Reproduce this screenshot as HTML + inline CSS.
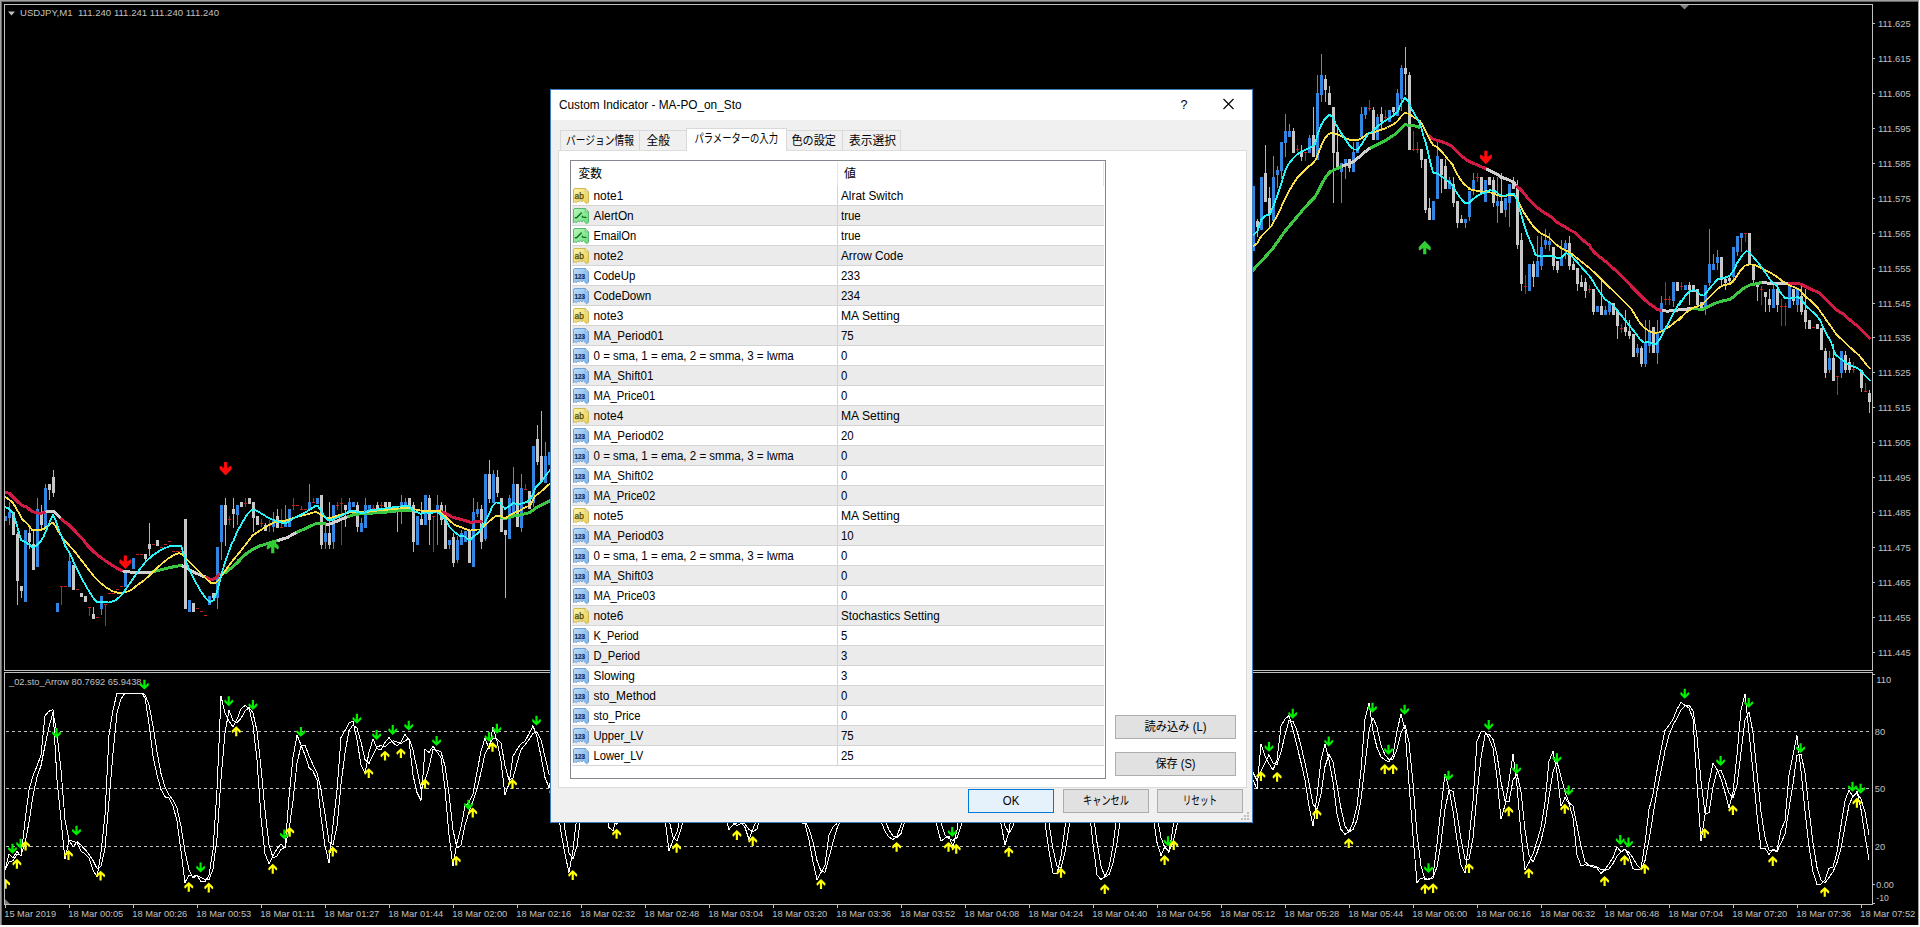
<!DOCTYPE html>
<html lang="ja"><head><meta charset="utf-8"><title>USDJPY,M1 - Custom Indicator - MA-PO_on_Sto</title>
<style>html,body{margin:0;padding:0;background:#000;width:1920px;height:927px;overflow:hidden}svg{display:block}text{white-space:pre}</style>
</head><body>
<svg width="1920" height="927" viewBox="0 0 1920 927">
<rect x="0" y="0" width="1920" height="927" fill="#000"/>
<g shape-rendering="crispEdges">
<rect x="0" y="0" width="1920" height="1" fill="#a0a0a0"/>
<rect x="0" y="1" width="1920" height="1" fill="#696969"/>
<rect x="0" y="0" width="1" height="925" fill="#a0a0a0"/>
<rect x="1" y="1" width="1" height="924" fill="#696969"/>
<rect x="1918" y="0" width="1" height="925" fill="#a0a0a0"/>
<rect x="1919" y="0" width="1" height="927" fill="#ffffff"/>
<rect x="0" y="925" width="1920" height="2" fill="#ffffff"/>
<rect x="4" y="4" width="1869" height="1" fill="#c0c0c0"/>
<rect x="4" y="4" width="1" height="667" fill="#c0c0c0"/>
<rect x="4" y="670" width="1869" height="1" fill="#c0c0c0"/>
<rect x="4" y="672" width="1869" height="1" fill="#c0c0c0"/>
<rect x="4" y="672" width="1" height="233" fill="#c0c0c0"/>
<rect x="4" y="904" width="1869" height="1" fill="#c0c0c0"/>
<rect x="1872" y="4" width="1" height="667" fill="#c0c0c0"/>
<rect x="1872" y="672" width="1" height="233" fill="#c0c0c0"/>
<rect x="1873" y="23" width="2" height="1" fill="#c0c0c0"/>
<rect x="1873" y="58" width="2" height="1" fill="#c0c0c0"/>
<rect x="1873" y="93" width="2" height="1" fill="#c0c0c0"/>
<rect x="1873" y="128" width="2" height="1" fill="#c0c0c0"/>
<rect x="1873" y="163" width="2" height="1" fill="#c0c0c0"/>
<rect x="1873" y="198" width="2" height="1" fill="#c0c0c0"/>
<rect x="1873" y="233" width="2" height="1" fill="#c0c0c0"/>
<rect x="1873" y="268" width="2" height="1" fill="#c0c0c0"/>
<rect x="1873" y="303" width="2" height="1" fill="#c0c0c0"/>
<rect x="1873" y="337" width="2" height="1" fill="#c0c0c0"/>
<rect x="1873" y="372" width="2" height="1" fill="#c0c0c0"/>
<rect x="1873" y="407" width="2" height="1" fill="#c0c0c0"/>
<rect x="1873" y="442" width="2" height="1" fill="#c0c0c0"/>
<rect x="1873" y="477" width="2" height="1" fill="#c0c0c0"/>
<rect x="1873" y="512" width="2" height="1" fill="#c0c0c0"/>
<rect x="1873" y="547" width="2" height="1" fill="#c0c0c0"/>
<rect x="1873" y="582" width="2" height="1" fill="#c0c0c0"/>
<rect x="1873" y="617" width="2" height="1" fill="#c0c0c0"/>
<rect x="1873" y="652" width="2" height="1" fill="#c0c0c0"/>
<rect x="1873" y="674" width="2" height="1" fill="#c0c0c0"/>
<rect x="1873" y="884" width="2" height="1" fill="#c0c0c0"/>
<rect x="1873" y="903" width="2" height="1" fill="#c0c0c0"/>
<rect x="5" y="905" width="1" height="3" fill="#c0c0c0"/>
<rect x="69" y="905" width="1" height="3" fill="#c0c0c0"/>
<rect x="133" y="905" width="1" height="3" fill="#c0c0c0"/>
<rect x="197" y="905" width="1" height="3" fill="#c0c0c0"/>
<rect x="261" y="905" width="1" height="3" fill="#c0c0c0"/>
<rect x="325" y="905" width="1" height="3" fill="#c0c0c0"/>
<rect x="389" y="905" width="1" height="3" fill="#c0c0c0"/>
<rect x="453" y="905" width="1" height="3" fill="#c0c0c0"/>
<rect x="517" y="905" width="1" height="3" fill="#c0c0c0"/>
<rect x="581" y="905" width="1" height="3" fill="#c0c0c0"/>
<rect x="645" y="905" width="1" height="3" fill="#c0c0c0"/>
<rect x="709" y="905" width="1" height="3" fill="#c0c0c0"/>
<rect x="773" y="905" width="1" height="3" fill="#c0c0c0"/>
<rect x="837" y="905" width="1" height="3" fill="#c0c0c0"/>
<rect x="901" y="905" width="1" height="3" fill="#c0c0c0"/>
<rect x="965" y="905" width="1" height="3" fill="#c0c0c0"/>
<rect x="1029" y="905" width="1" height="3" fill="#c0c0c0"/>
<rect x="1093" y="905" width="1" height="3" fill="#c0c0c0"/>
<rect x="1157" y="905" width="1" height="3" fill="#c0c0c0"/>
<rect x="1221" y="905" width="1" height="3" fill="#c0c0c0"/>
<rect x="1285" y="905" width="1" height="3" fill="#c0c0c0"/>
<rect x="1349" y="905" width="1" height="3" fill="#c0c0c0"/>
<rect x="1413" y="905" width="1" height="3" fill="#c0c0c0"/>
<rect x="1477" y="905" width="1" height="3" fill="#c0c0c0"/>
<rect x="1541" y="905" width="1" height="3" fill="#c0c0c0"/>
<rect x="1605" y="905" width="1" height="3" fill="#c0c0c0"/>
<rect x="1669" y="905" width="1" height="3" fill="#c0c0c0"/>
<rect x="1733" y="905" width="1" height="3" fill="#c0c0c0"/>
<rect x="1797" y="905" width="1" height="3" fill="#c0c0c0"/>
<rect x="1861" y="905" width="1" height="3" fill="#c0c0c0"/>
</g>
<path d="M1680 5 L1689 5 L1684.5 9.5 Z" fill="#808080"/>
<path d="M8 11.5 L15 11.5 L11.5 15.5 Z" fill="#c0c0c0"/>
<text x="20" y="16" font-family="'Liberation Sans',sans-serif" font-size="9.8" fill="#c0c0c0" textLength="199" lengthAdjust="spacingAndGlyphs" xml:space="preserve">USDJPY,M1  111.240 111.241 111.240 111.240</text>
<text x="9" y="685" font-family="'Liberation Sans',sans-serif" font-size="9.8" fill="#c0c0c0" textLength="132.5" lengthAdjust="spacingAndGlyphs" xml:space="preserve">_02.sto_Arrow 80.7692 65.9438</text>
<text x="1878" y="27" font-family="'Liberation Sans',sans-serif" font-size="9.8" fill="#c0c0c0" textLength="32.8" lengthAdjust="spacingAndGlyphs" xml:space="preserve">111.625</text>
<text x="1878" y="62" font-family="'Liberation Sans',sans-serif" font-size="9.8" fill="#c0c0c0" textLength="32.8" lengthAdjust="spacingAndGlyphs" xml:space="preserve">111.615</text>
<text x="1878" y="97" font-family="'Liberation Sans',sans-serif" font-size="9.8" fill="#c0c0c0" textLength="32.8" lengthAdjust="spacingAndGlyphs" xml:space="preserve">111.605</text>
<text x="1878" y="132" font-family="'Liberation Sans',sans-serif" font-size="9.8" fill="#c0c0c0" textLength="32.8" lengthAdjust="spacingAndGlyphs" xml:space="preserve">111.595</text>
<text x="1878" y="167" font-family="'Liberation Sans',sans-serif" font-size="9.8" fill="#c0c0c0" textLength="32.8" lengthAdjust="spacingAndGlyphs" xml:space="preserve">111.585</text>
<text x="1878" y="202" font-family="'Liberation Sans',sans-serif" font-size="9.8" fill="#c0c0c0" textLength="32.8" lengthAdjust="spacingAndGlyphs" xml:space="preserve">111.575</text>
<text x="1878" y="237" font-family="'Liberation Sans',sans-serif" font-size="9.8" fill="#c0c0c0" textLength="32.8" lengthAdjust="spacingAndGlyphs" xml:space="preserve">111.565</text>
<text x="1878" y="272" font-family="'Liberation Sans',sans-serif" font-size="9.8" fill="#c0c0c0" textLength="32.8" lengthAdjust="spacingAndGlyphs" xml:space="preserve">111.555</text>
<text x="1878" y="307" font-family="'Liberation Sans',sans-serif" font-size="9.8" fill="#c0c0c0" textLength="32.8" lengthAdjust="spacingAndGlyphs" xml:space="preserve">111.545</text>
<text x="1878" y="341" font-family="'Liberation Sans',sans-serif" font-size="9.8" fill="#c0c0c0" textLength="32.8" lengthAdjust="spacingAndGlyphs" xml:space="preserve">111.535</text>
<text x="1878" y="376" font-family="'Liberation Sans',sans-serif" font-size="9.8" fill="#c0c0c0" textLength="32.8" lengthAdjust="spacingAndGlyphs" xml:space="preserve">111.525</text>
<text x="1878" y="411" font-family="'Liberation Sans',sans-serif" font-size="9.8" fill="#c0c0c0" textLength="32.8" lengthAdjust="spacingAndGlyphs" xml:space="preserve">111.515</text>
<text x="1878" y="446" font-family="'Liberation Sans',sans-serif" font-size="9.8" fill="#c0c0c0" textLength="32.8" lengthAdjust="spacingAndGlyphs" xml:space="preserve">111.505</text>
<text x="1878" y="481" font-family="'Liberation Sans',sans-serif" font-size="9.8" fill="#c0c0c0" textLength="32.8" lengthAdjust="spacingAndGlyphs" xml:space="preserve">111.495</text>
<text x="1878" y="516" font-family="'Liberation Sans',sans-serif" font-size="9.8" fill="#c0c0c0" textLength="32.8" lengthAdjust="spacingAndGlyphs" xml:space="preserve">111.485</text>
<text x="1878" y="551" font-family="'Liberation Sans',sans-serif" font-size="9.8" fill="#c0c0c0" textLength="32.8" lengthAdjust="spacingAndGlyphs" xml:space="preserve">111.475</text>
<text x="1878" y="586" font-family="'Liberation Sans',sans-serif" font-size="9.8" fill="#c0c0c0" textLength="32.8" lengthAdjust="spacingAndGlyphs" xml:space="preserve">111.465</text>
<text x="1878" y="621" font-family="'Liberation Sans',sans-serif" font-size="9.8" fill="#c0c0c0" textLength="32.8" lengthAdjust="spacingAndGlyphs" xml:space="preserve">111.455</text>
<text x="1878" y="656" font-family="'Liberation Sans',sans-serif" font-size="9.8" fill="#c0c0c0" textLength="32.8" lengthAdjust="spacingAndGlyphs" xml:space="preserve">111.445</text>
<text x="1876.3" y="683" font-family="'Liberation Sans',sans-serif" font-size="9.8" fill="#c0c0c0" textLength="15" lengthAdjust="spacingAndGlyphs" xml:space="preserve">110</text>
<text x="1874.8" y="735" font-family="'Liberation Sans',sans-serif" font-size="9.8" fill="#c0c0c0" textLength="10.4" lengthAdjust="spacingAndGlyphs" xml:space="preserve">80</text>
<text x="1874.8" y="792" font-family="'Liberation Sans',sans-serif" font-size="9.8" fill="#c0c0c0" textLength="10.4" lengthAdjust="spacingAndGlyphs" xml:space="preserve">50</text>
<text x="1874.8" y="850" font-family="'Liberation Sans',sans-serif" font-size="9.8" fill="#c0c0c0" textLength="10.4" lengthAdjust="spacingAndGlyphs" xml:space="preserve">20</text>
<text x="1876.3" y="888" font-family="'Liberation Sans',sans-serif" font-size="9.8" fill="#c0c0c0" textLength="17.6" lengthAdjust="spacingAndGlyphs" xml:space="preserve">0.00</text>
<text x="1876.3" y="901" font-family="'Liberation Sans',sans-serif" font-size="9.8" fill="#c0c0c0" textLength="12.4" lengthAdjust="spacingAndGlyphs" xml:space="preserve">-10</text>
<text x="4.3" y="917" font-family="'Liberation Sans',sans-serif" font-size="9.8" fill="#c0c0c0" textLength="51.8" lengthAdjust="spacingAndGlyphs" xml:space="preserve">15 Mar 2019</text>
<text x="68.3" y="917" font-family="'Liberation Sans',sans-serif" font-size="9.8" fill="#c0c0c0" textLength="55.0" lengthAdjust="spacingAndGlyphs" xml:space="preserve">18 Mar 00:05</text>
<text x="132.3" y="917" font-family="'Liberation Sans',sans-serif" font-size="9.8" fill="#c0c0c0" textLength="55.0" lengthAdjust="spacingAndGlyphs" xml:space="preserve">18 Mar 00:26</text>
<text x="196.3" y="917" font-family="'Liberation Sans',sans-serif" font-size="9.8" fill="#c0c0c0" textLength="55.0" lengthAdjust="spacingAndGlyphs" xml:space="preserve">18 Mar 00:53</text>
<text x="260.3" y="917" font-family="'Liberation Sans',sans-serif" font-size="9.8" fill="#c0c0c0" textLength="55.0" lengthAdjust="spacingAndGlyphs" xml:space="preserve">18 Mar 01:11</text>
<text x="324.3" y="917" font-family="'Liberation Sans',sans-serif" font-size="9.8" fill="#c0c0c0" textLength="55.0" lengthAdjust="spacingAndGlyphs" xml:space="preserve">18 Mar 01:27</text>
<text x="388.3" y="917" font-family="'Liberation Sans',sans-serif" font-size="9.8" fill="#c0c0c0" textLength="55.0" lengthAdjust="spacingAndGlyphs" xml:space="preserve">18 Mar 01:44</text>
<text x="452.3" y="917" font-family="'Liberation Sans',sans-serif" font-size="9.8" fill="#c0c0c0" textLength="55.0" lengthAdjust="spacingAndGlyphs" xml:space="preserve">18 Mar 02:00</text>
<text x="516.3" y="917" font-family="'Liberation Sans',sans-serif" font-size="9.8" fill="#c0c0c0" textLength="55.0" lengthAdjust="spacingAndGlyphs" xml:space="preserve">18 Mar 02:16</text>
<text x="580.3" y="917" font-family="'Liberation Sans',sans-serif" font-size="9.8" fill="#c0c0c0" textLength="55.0" lengthAdjust="spacingAndGlyphs" xml:space="preserve">18 Mar 02:32</text>
<text x="644.3" y="917" font-family="'Liberation Sans',sans-serif" font-size="9.8" fill="#c0c0c0" textLength="55.0" lengthAdjust="spacingAndGlyphs" xml:space="preserve">18 Mar 02:48</text>
<text x="708.3" y="917" font-family="'Liberation Sans',sans-serif" font-size="9.8" fill="#c0c0c0" textLength="55.0" lengthAdjust="spacingAndGlyphs" xml:space="preserve">18 Mar 03:04</text>
<text x="772.3" y="917" font-family="'Liberation Sans',sans-serif" font-size="9.8" fill="#c0c0c0" textLength="55.0" lengthAdjust="spacingAndGlyphs" xml:space="preserve">18 Mar 03:20</text>
<text x="836.3" y="917" font-family="'Liberation Sans',sans-serif" font-size="9.8" fill="#c0c0c0" textLength="55.0" lengthAdjust="spacingAndGlyphs" xml:space="preserve">18 Mar 03:36</text>
<text x="900.3" y="917" font-family="'Liberation Sans',sans-serif" font-size="9.8" fill="#c0c0c0" textLength="55.0" lengthAdjust="spacingAndGlyphs" xml:space="preserve">18 Mar 03:52</text>
<text x="964.3" y="917" font-family="'Liberation Sans',sans-serif" font-size="9.8" fill="#c0c0c0" textLength="55.0" lengthAdjust="spacingAndGlyphs" xml:space="preserve">18 Mar 04:08</text>
<text x="1028.3" y="917" font-family="'Liberation Sans',sans-serif" font-size="9.8" fill="#c0c0c0" textLength="55.0" lengthAdjust="spacingAndGlyphs" xml:space="preserve">18 Mar 04:24</text>
<text x="1092.3" y="917" font-family="'Liberation Sans',sans-serif" font-size="9.8" fill="#c0c0c0" textLength="55.0" lengthAdjust="spacingAndGlyphs" xml:space="preserve">18 Mar 04:40</text>
<text x="1156.3" y="917" font-family="'Liberation Sans',sans-serif" font-size="9.8" fill="#c0c0c0" textLength="55.0" lengthAdjust="spacingAndGlyphs" xml:space="preserve">18 Mar 04:56</text>
<text x="1220.3" y="917" font-family="'Liberation Sans',sans-serif" font-size="9.8" fill="#c0c0c0" textLength="55.0" lengthAdjust="spacingAndGlyphs" xml:space="preserve">18 Mar 05:12</text>
<text x="1284.3" y="917" font-family="'Liberation Sans',sans-serif" font-size="9.8" fill="#c0c0c0" textLength="55.0" lengthAdjust="spacingAndGlyphs" xml:space="preserve">18 Mar 05:28</text>
<text x="1348.3" y="917" font-family="'Liberation Sans',sans-serif" font-size="9.8" fill="#c0c0c0" textLength="55.0" lengthAdjust="spacingAndGlyphs" xml:space="preserve">18 Mar 05:44</text>
<text x="1412.3" y="917" font-family="'Liberation Sans',sans-serif" font-size="9.8" fill="#c0c0c0" textLength="55.0" lengthAdjust="spacingAndGlyphs" xml:space="preserve">18 Mar 06:00</text>
<text x="1476.3" y="917" font-family="'Liberation Sans',sans-serif" font-size="9.8" fill="#c0c0c0" textLength="55.0" lengthAdjust="spacingAndGlyphs" xml:space="preserve">18 Mar 06:16</text>
<text x="1540.3" y="917" font-family="'Liberation Sans',sans-serif" font-size="9.8" fill="#c0c0c0" textLength="55.0" lengthAdjust="spacingAndGlyphs" xml:space="preserve">18 Mar 06:32</text>
<text x="1604.3" y="917" font-family="'Liberation Sans',sans-serif" font-size="9.8" fill="#c0c0c0" textLength="55.0" lengthAdjust="spacingAndGlyphs" xml:space="preserve">18 Mar 06:48</text>
<text x="1668.3" y="917" font-family="'Liberation Sans',sans-serif" font-size="9.8" fill="#c0c0c0" textLength="55.0" lengthAdjust="spacingAndGlyphs" xml:space="preserve">18 Mar 07:04</text>
<text x="1732.3" y="917" font-family="'Liberation Sans',sans-serif" font-size="9.8" fill="#c0c0c0" textLength="55.0" lengthAdjust="spacingAndGlyphs" xml:space="preserve">18 Mar 07:20</text>
<text x="1796.3" y="917" font-family="'Liberation Sans',sans-serif" font-size="9.8" fill="#c0c0c0" textLength="55.0" lengthAdjust="spacingAndGlyphs" xml:space="preserve">18 Mar 07:36</text>
<text x="1860.3" y="917" font-family="'Liberation Sans',sans-serif" font-size="9.8" fill="#c0c0c0" textLength="55.0" lengthAdjust="spacingAndGlyphs" xml:space="preserve">18 Mar 07:52</text>
<g shape-rendering="crispEdges" stroke="#c0c0c0" stroke-width="1" stroke-dasharray="3 3">
<line x1="6" y1="731.5" x2="1872" y2="731.5"/>
<line x1="6" y1="788.5" x2="1872" y2="788.5"/>
<line x1="6" y1="846.5" x2="1872" y2="846.5"/>
</g>
<clipPath id="cpM"><rect x="5" y="5" width="1867" height="665"/></clipPath><g clip-path="url(#cpM)">
<g id="candles" shape-rendering="crispEdges">
<rect x="5" y="516" width="1" height="5" fill="#4f8cd2"/>
<rect x="4" y="516" width="3" height="5" fill="#3286e2"/>
<rect x="9" y="502" width="1" height="23" fill="#4f8cd2"/>
<rect x="8" y="512" width="3" height="6" fill="#3286e2"/>
<rect x="13" y="512" width="1" height="23" fill="#b4b4b4"/>
<rect x="12" y="512" width="3" height="23" fill="#c8c8c8"/>
<rect x="17" y="532" width="1" height="73" fill="#b4b4b4"/>
<rect x="16" y="534" width="3" height="47" fill="#c8c8c8"/>
<rect x="21" y="586" width="1" height="12" fill="#b4b4b4"/>
<rect x="20" y="586" width="3" height="5" fill="#c8c8c8"/>
<rect x="25" y="530" width="1" height="72" fill="#4f8cd2"/>
<rect x="24" y="530" width="3" height="72" fill="#3286e2"/>
<rect x="29" y="526" width="1" height="23" fill="#b4b4b4"/>
<rect x="28" y="533" width="3" height="9" fill="#c8c8c8"/>
<rect x="33" y="530" width="1" height="40" fill="#b4b4b4"/>
<rect x="32" y="544" width="3" height="26" fill="#c8c8c8"/>
<rect x="37" y="498" width="1" height="69" fill="#4f8cd2"/>
<rect x="36" y="509" width="3" height="58" fill="#3286e2"/>
<rect x="41" y="505" width="1" height="24" fill="#b4b4b4"/>
<rect x="40" y="514" width="3" height="11" fill="#c8c8c8"/>
<rect x="45" y="484" width="1" height="43" fill="#4f8cd2"/>
<rect x="44" y="488" width="3" height="39" fill="#3286e2"/>
<rect x="49" y="484" width="1" height="16" fill="#b4b4b4"/>
<rect x="48" y="484" width="3" height="6" fill="#c8c8c8"/>
<rect x="53" y="470" width="1" height="27" fill="#b4b4b4"/>
<rect x="52" y="477" width="3" height="16" fill="#c8c8c8"/>
<rect x="57" y="603" width="1" height="9" fill="#4f8cd2"/>
<rect x="56" y="603" width="3" height="9" fill="#3286e2"/>
<rect x="61" y="586" width="1" height="19" fill="#c02424"/>
<rect x="60" y="586" width="3" height="1" fill="#c02424"/>
<rect x="64" y="586" width="3" height="1" fill="#c02424"/>
<rect x="69" y="554" width="1" height="33" fill="#4f8cd2"/>
<rect x="68" y="561" width="3" height="26" fill="#3286e2"/>
<rect x="73" y="565" width="1" height="25" fill="#b4b4b4"/>
<rect x="72" y="565" width="3" height="25" fill="#c8c8c8"/>
<rect x="76" y="589" width="3" height="1" fill="#c02424"/>
<rect x="81" y="593" width="1" height="4" fill="#b4b4b4"/>
<rect x="80" y="593" width="3" height="4" fill="#c8c8c8"/>
<rect x="85" y="596" width="1" height="6" fill="#b4b4b4"/>
<rect x="84" y="596" width="3" height="6" fill="#c8c8c8"/>
<rect x="89" y="607" width="1" height="9" fill="#c02424"/>
<rect x="88" y="607" width="3" height="1" fill="#c02424"/>
<rect x="93" y="607" width="1" height="12" fill="#b4b4b4"/>
<rect x="92" y="614" width="3" height="5" fill="#c8c8c8"/>
<rect x="96" y="617" width="3" height="1" fill="#c02424"/>
<rect x="101" y="596" width="1" height="19" fill="#4f8cd2"/>
<rect x="100" y="596" width="3" height="13" fill="#3286e2"/>
<rect x="105" y="604" width="1" height="22" fill="#c02424"/>
<rect x="104" y="604" width="3" height="1" fill="#c02424"/>
<rect x="108" y="593" width="3" height="1" fill="#c02424"/>
<rect x="112" y="593" width="3" height="1" fill="#c02424"/>
<rect x="116" y="589" width="3" height="1" fill="#c02424"/>
<rect x="120" y="586" width="3" height="1" fill="#c02424"/>
<rect x="125" y="573" width="1" height="14" fill="#4f8cd2"/>
<rect x="124" y="573" width="3" height="14" fill="#3286e2"/>
<rect x="133" y="558" width="1" height="11" fill="#4f8cd2"/>
<rect x="132" y="558" width="3" height="11" fill="#3286e2"/>
<rect x="136" y="554" width="3" height="1" fill="#c02424"/>
<rect x="140" y="554" width="3" height="1" fill="#c02424"/>
<rect x="145" y="554" width="1" height="9" fill="#b4b4b4"/>
<rect x="144" y="554" width="3" height="5" fill="#c8c8c8"/>
<rect x="149" y="523" width="1" height="33" fill="#b4b4b4"/>
<rect x="148" y="544" width="3" height="5" fill="#c8c8c8"/>
<rect x="152" y="544" width="3" height="1" fill="#c02424"/>
<rect x="157" y="540" width="1" height="6" fill="#b4b4b4"/>
<rect x="156" y="540" width="3" height="6" fill="#c8c8c8"/>
<rect x="160" y="547" width="3" height="1" fill="#c02424"/>
<rect x="164" y="544" width="3" height="1" fill="#c02424"/>
<rect x="168" y="541" width="3" height="1" fill="#c02424"/>
<rect x="172" y="551" width="3" height="1" fill="#c02424"/>
<rect x="176" y="551" width="3" height="1" fill="#c02424"/>
<rect x="180" y="551" width="3" height="1" fill="#c02424"/>
<rect x="185" y="519" width="1" height="90" fill="#b4b4b4"/>
<rect x="184" y="519" width="3" height="90" fill="#c8c8c8"/>
<rect x="189" y="600" width="1" height="12" fill="#4f8cd2"/>
<rect x="188" y="600" width="3" height="12" fill="#3286e2"/>
<rect x="193" y="603" width="1" height="9" fill="#b4b4b4"/>
<rect x="192" y="603" width="3" height="9" fill="#c8c8c8"/>
<rect x="196" y="608" width="3" height="1" fill="#c02424"/>
<rect x="200" y="611" width="3" height="1" fill="#c02424"/>
<rect x="204" y="615" width="3" height="1" fill="#c02424"/>
<rect x="209" y="596" width="1" height="9" fill="#4f8cd2"/>
<rect x="208" y="596" width="3" height="9" fill="#3286e2"/>
<rect x="213" y="593" width="1" height="5" fill="#b4b4b4"/>
<rect x="212" y="593" width="3" height="5" fill="#c8c8c8"/>
<rect x="217" y="547" width="1" height="62" fill="#4f8cd2"/>
<rect x="216" y="547" width="3" height="51" fill="#3286e2"/>
<rect x="221" y="505" width="1" height="55" fill="#4f8cd2"/>
<rect x="220" y="505" width="3" height="37" fill="#3286e2"/>
<rect x="225" y="498" width="1" height="48" fill="#b4b4b4"/>
<rect x="224" y="505" width="3" height="20" fill="#c8c8c8"/>
<rect x="229" y="516" width="1" height="9" fill="#c02424"/>
<rect x="228" y="519" width="3" height="1" fill="#c02424"/>
<rect x="233" y="498" width="1" height="30" fill="#b4b4b4"/>
<rect x="232" y="509" width="3" height="5" fill="#c8c8c8"/>
<rect x="237" y="505" width="1" height="20" fill="#4f8cd2"/>
<rect x="236" y="505" width="3" height="10" fill="#3286e2"/>
<rect x="241" y="502" width="1" height="5" fill="#b4b4b4"/>
<rect x="240" y="502" width="3" height="5" fill="#c8c8c8"/>
<rect x="245" y="498" width="1" height="9" fill="#c02424"/>
<rect x="244" y="503" width="3" height="1" fill="#c02424"/>
<rect x="249" y="498" width="1" height="6" fill="#b4b4b4"/>
<rect x="248" y="498" width="3" height="6" fill="#c8c8c8"/>
<rect x="253" y="502" width="1" height="30" fill="#b4b4b4"/>
<rect x="252" y="502" width="3" height="16" fill="#c8c8c8"/>
<rect x="257" y="516" width="1" height="9" fill="#b4b4b4"/>
<rect x="256" y="516" width="3" height="9" fill="#c8c8c8"/>
<rect x="261" y="519" width="1" height="8" fill="#c02424"/>
<rect x="260" y="523" width="3" height="1" fill="#c02424"/>
<rect x="265" y="523" width="1" height="8" fill="#b4b4b4"/>
<rect x="264" y="525" width="3" height="6" fill="#c8c8c8"/>
<rect x="269" y="520" width="1" height="12" fill="#c02424"/>
<rect x="268" y="525" width="3" height="1" fill="#c02424"/>
<rect x="273" y="512" width="1" height="20" fill="#4f8cd2"/>
<rect x="272" y="520" width="3" height="7" fill="#3286e2"/>
<rect x="277" y="509" width="1" height="19" fill="#b4b4b4"/>
<rect x="276" y="516" width="3" height="12" fill="#c8c8c8"/>
<rect x="281" y="509" width="1" height="19" fill="#c02424"/>
<rect x="280" y="527" width="3" height="1" fill="#c02424"/>
<rect x="285" y="505" width="1" height="22" fill="#4f8cd2"/>
<rect x="284" y="520" width="3" height="7" fill="#3286e2"/>
<rect x="289" y="509" width="1" height="18" fill="#4f8cd2"/>
<rect x="288" y="509" width="3" height="18" fill="#3286e2"/>
<rect x="293" y="498" width="1" height="12" fill="#c02424"/>
<rect x="292" y="505" width="3" height="1" fill="#c02424"/>
<rect x="296" y="505" width="3" height="1" fill="#c02424"/>
<rect x="301" y="506" width="1" height="4" fill="#c02424"/>
<rect x="300" y="509" width="3" height="1" fill="#c02424"/>
<rect x="304" y="509" width="3" height="1" fill="#c02424"/>
<rect x="309" y="484" width="1" height="25" fill="#4f8cd2"/>
<rect x="308" y="502" width="3" height="7" fill="#3286e2"/>
<rect x="313" y="498" width="1" height="5" fill="#c02424"/>
<rect x="312" y="502" width="3" height="1" fill="#c02424"/>
<rect x="317" y="498" width="1" height="6" fill="#4f8cd2"/>
<rect x="316" y="498" width="3" height="6" fill="#3286e2"/>
<rect x="321" y="495" width="1" height="54" fill="#b4b4b4"/>
<rect x="320" y="495" width="3" height="50" fill="#c8c8c8"/>
<rect x="325" y="525" width="1" height="24" fill="#4f8cd2"/>
<rect x="324" y="533" width="3" height="9" fill="#3286e2"/>
<rect x="329" y="502" width="1" height="47" fill="#b4b4b4"/>
<rect x="328" y="533" width="3" height="12" fill="#c8c8c8"/>
<rect x="333" y="505" width="1" height="44" fill="#4f8cd2"/>
<rect x="332" y="505" width="3" height="37" fill="#3286e2"/>
<rect x="337" y="502" width="1" height="8" fill="#c02424"/>
<rect x="336" y="505" width="3" height="1" fill="#c02424"/>
<rect x="341" y="498" width="1" height="47" fill="#c02424"/>
<rect x="340" y="503" width="3" height="1" fill="#c02424"/>
<rect x="345" y="505" width="1" height="22" fill="#b4b4b4"/>
<rect x="344" y="505" width="3" height="5" fill="#c8c8c8"/>
<rect x="349" y="498" width="1" height="13" fill="#4f8cd2"/>
<rect x="348" y="502" width="3" height="9" fill="#3286e2"/>
<rect x="353" y="502" width="1" height="5" fill="#4f8cd2"/>
<rect x="352" y="502" width="3" height="5" fill="#3286e2"/>
<rect x="357" y="502" width="1" height="30" fill="#b4b4b4"/>
<rect x="356" y="505" width="3" height="22" fill="#c8c8c8"/>
<rect x="361" y="518" width="1" height="14" fill="#4f8cd2"/>
<rect x="360" y="523" width="3" height="9" fill="#3286e2"/>
<rect x="365" y="498" width="1" height="30" fill="#4f8cd2"/>
<rect x="364" y="505" width="3" height="23" fill="#3286e2"/>
<rect x="369" y="505" width="1" height="8" fill="#4f8cd2"/>
<rect x="368" y="505" width="3" height="8" fill="#3286e2"/>
<rect x="373" y="505" width="1" height="5" fill="#c02424"/>
<rect x="372" y="508" width="3" height="1" fill="#c02424"/>
<rect x="377" y="502" width="1" height="8" fill="#b4b4b4"/>
<rect x="376" y="505" width="3" height="5" fill="#c8c8c8"/>
<rect x="381" y="502" width="1" height="7" fill="#c02424"/>
<rect x="380" y="505" width="3" height="1" fill="#c02424"/>
<rect x="385" y="502" width="1" height="5" fill="#b4b4b4"/>
<rect x="384" y="502" width="3" height="5" fill="#c8c8c8"/>
<rect x="389" y="502" width="1" height="5" fill="#b4b4b4"/>
<rect x="388" y="502" width="3" height="5" fill="#c8c8c8"/>
<rect x="397" y="506" width="1" height="26" fill="#b4b4b4"/>
<rect x="396" y="508" width="3" height="4" fill="#c8c8c8"/>
<rect x="401" y="495" width="1" height="29" fill="#4f8cd2"/>
<rect x="400" y="502" width="3" height="7" fill="#3286e2"/>
<rect x="405" y="498" width="1" height="9" fill="#4f8cd2"/>
<rect x="404" y="502" width="3" height="5" fill="#3286e2"/>
<rect x="409" y="498" width="1" height="11" fill="#b4b4b4"/>
<rect x="408" y="498" width="3" height="11" fill="#c8c8c8"/>
<rect x="413" y="502" width="1" height="50" fill="#b4b4b4"/>
<rect x="412" y="505" width="3" height="37" fill="#c8c8c8"/>
<rect x="417" y="516" width="1" height="29" fill="#4f8cd2"/>
<rect x="416" y="516" width="3" height="29" fill="#3286e2"/>
<rect x="421" y="502" width="1" height="23" fill="#b4b4b4"/>
<rect x="420" y="519" width="3" height="6" fill="#c8c8c8"/>
<rect x="425" y="495" width="1" height="30" fill="#4f8cd2"/>
<rect x="424" y="495" width="3" height="30" fill="#3286e2"/>
<rect x="429" y="495" width="1" height="50" fill="#b4b4b4"/>
<rect x="428" y="498" width="3" height="22" fill="#c8c8c8"/>
<rect x="433" y="516" width="1" height="36" fill="#c02424"/>
<rect x="432" y="516" width="3" height="1" fill="#c02424"/>
<rect x="437" y="495" width="1" height="50" fill="#4f8cd2"/>
<rect x="436" y="505" width="3" height="8" fill="#3286e2"/>
<rect x="441" y="502" width="1" height="23" fill="#b4b4b4"/>
<rect x="440" y="505" width="3" height="15" fill="#c8c8c8"/>
<rect x="445" y="505" width="1" height="44" fill="#b4b4b4"/>
<rect x="444" y="512" width="3" height="37" fill="#c8c8c8"/>
<rect x="449" y="540" width="1" height="9" fill="#4f8cd2"/>
<rect x="448" y="540" width="3" height="5" fill="#3286e2"/>
<rect x="453" y="533" width="1" height="34" fill="#b4b4b4"/>
<rect x="452" y="537" width="3" height="26" fill="#c8c8c8"/>
<rect x="457" y="536" width="1" height="27" fill="#4f8cd2"/>
<rect x="456" y="540" width="3" height="20" fill="#3286e2"/>
<rect x="461" y="530" width="1" height="15" fill="#4f8cd2"/>
<rect x="460" y="533" width="3" height="12" fill="#3286e2"/>
<rect x="465" y="531" width="1" height="11" fill="#4f8cd2"/>
<rect x="464" y="531" width="3" height="11" fill="#3286e2"/>
<rect x="469" y="530" width="1" height="33" fill="#b4b4b4"/>
<rect x="468" y="530" width="3" height="33" fill="#c8c8c8"/>
<rect x="473" y="498" width="1" height="69" fill="#4f8cd2"/>
<rect x="472" y="512" width="3" height="55" fill="#3286e2"/>
<rect x="477" y="502" width="1" height="15" fill="#4f8cd2"/>
<rect x="476" y="509" width="3" height="5" fill="#3286e2"/>
<rect x="481" y="505" width="1" height="44" fill="#b4b4b4"/>
<rect x="480" y="509" width="3" height="33" fill="#c8c8c8"/>
<rect x="485" y="474" width="1" height="67" fill="#4f8cd2"/>
<rect x="484" y="474" width="3" height="65" fill="#3286e2"/>
<rect x="489" y="460" width="1" height="43" fill="#b4b4b4"/>
<rect x="488" y="474" width="3" height="25" fill="#c8c8c8"/>
<rect x="493" y="470" width="1" height="33" fill="#4f8cd2"/>
<rect x="492" y="474" width="3" height="29" fill="#3286e2"/>
<rect x="497" y="470" width="1" height="27" fill="#b4b4b4"/>
<rect x="496" y="477" width="3" height="16" fill="#c8c8c8"/>
<rect x="501" y="498" width="1" height="34" fill="#b4b4b4"/>
<rect x="500" y="498" width="3" height="34" fill="#c8c8c8"/>
<rect x="505" y="530" width="1" height="68" fill="#b4b4b4"/>
<rect x="504" y="530" width="3" height="5" fill="#c8c8c8"/>
<rect x="509" y="495" width="1" height="44" fill="#4f8cd2"/>
<rect x="508" y="498" width="3" height="41" fill="#3286e2"/>
<rect x="513" y="467" width="1" height="49" fill="#4f8cd2"/>
<rect x="512" y="484" width="3" height="32" fill="#3286e2"/>
<rect x="517" y="484" width="1" height="43" fill="#b4b4b4"/>
<rect x="516" y="484" width="3" height="43" fill="#c8c8c8"/>
<rect x="521" y="474" width="1" height="58" fill="#4f8cd2"/>
<rect x="520" y="488" width="3" height="40" fill="#3286e2"/>
<rect x="525" y="484" width="1" height="6" fill="#c02424"/>
<rect x="524" y="489" width="3" height="1" fill="#c02424"/>
<rect x="529" y="491" width="1" height="18" fill="#b4b4b4"/>
<rect x="528" y="491" width="3" height="18" fill="#c8c8c8"/>
<rect x="533" y="446" width="1" height="61" fill="#4f8cd2"/>
<rect x="532" y="446" width="3" height="57" fill="#3286e2"/>
<rect x="537" y="425" width="1" height="40" fill="#b4b4b4"/>
<rect x="536" y="439" width="3" height="23" fill="#c8c8c8"/>
<rect x="541" y="411" width="1" height="71" fill="#b4b4b4"/>
<rect x="540" y="456" width="3" height="26" fill="#c8c8c8"/>
<rect x="545" y="442" width="1" height="41" fill="#4f8cd2"/>
<rect x="544" y="456" width="3" height="27" fill="#3286e2"/>
<rect x="549" y="452" width="1" height="13" fill="#4f8cd2"/>
<rect x="548" y="452" width="3" height="13" fill="#3286e2"/>
<rect x="1253" y="186" width="1" height="65" fill="#4f8cd2"/>
<rect x="1252" y="186" width="3" height="65" fill="#3286e2"/>
<rect x="1257" y="219" width="1" height="18" fill="#b4b4b4"/>
<rect x="1256" y="221" width="3" height="6" fill="#c8c8c8"/>
<rect x="1261" y="177" width="1" height="53" fill="#4f8cd2"/>
<rect x="1260" y="177" width="3" height="53" fill="#3286e2"/>
<rect x="1265" y="145" width="1" height="57" fill="#b4b4b4"/>
<rect x="1264" y="173" width="3" height="29" fill="#c8c8c8"/>
<rect x="1269" y="187" width="1" height="42" fill="#b4b4b4"/>
<rect x="1268" y="198" width="3" height="17" fill="#c8c8c8"/>
<rect x="1273" y="156" width="1" height="65" fill="#4f8cd2"/>
<rect x="1272" y="177" width="3" height="44" fill="#3286e2"/>
<rect x="1277" y="166" width="1" height="22" fill="#4f8cd2"/>
<rect x="1276" y="170" width="3" height="5" fill="#3286e2"/>
<rect x="1281" y="142" width="1" height="37" fill="#4f8cd2"/>
<rect x="1280" y="142" width="3" height="29" fill="#3286e2"/>
<rect x="1285" y="114" width="1" height="43" fill="#4f8cd2"/>
<rect x="1284" y="131" width="3" height="12" fill="#3286e2"/>
<rect x="1289" y="124" width="1" height="13" fill="#4f8cd2"/>
<rect x="1288" y="131" width="3" height="6" fill="#3286e2"/>
<rect x="1293" y="128" width="1" height="25" fill="#b4b4b4"/>
<rect x="1292" y="131" width="3" height="22" fill="#c8c8c8"/>
<rect x="1297" y="145" width="1" height="7" fill="#c02424"/>
<rect x="1296" y="149" width="3" height="1" fill="#c02424"/>
<rect x="1301" y="145" width="1" height="16" fill="#b4b4b4"/>
<rect x="1300" y="152" width="3" height="5" fill="#c8c8c8"/>
<rect x="1305" y="152" width="1" height="9" fill="#c02424"/>
<rect x="1304" y="152" width="3" height="1" fill="#c02424"/>
<rect x="1309" y="135" width="1" height="18" fill="#4f8cd2"/>
<rect x="1308" y="138" width="3" height="15" fill="#3286e2"/>
<rect x="1313" y="107" width="1" height="50" fill="#b4b4b4"/>
<rect x="1312" y="135" width="3" height="22" fill="#c8c8c8"/>
<rect x="1317" y="75" width="1" height="85" fill="#4f8cd2"/>
<rect x="1316" y="93" width="3" height="67" fill="#3286e2"/>
<rect x="1321" y="54" width="1" height="48" fill="#4f8cd2"/>
<rect x="1320" y="75" width="3" height="20" fill="#3286e2"/>
<rect x="1325" y="75" width="1" height="27" fill="#b4b4b4"/>
<rect x="1324" y="79" width="3" height="11" fill="#c8c8c8"/>
<rect x="1329" y="86" width="1" height="19" fill="#b4b4b4"/>
<rect x="1328" y="93" width="3" height="12" fill="#c8c8c8"/>
<rect x="1333" y="107" width="1" height="96" fill="#b4b4b4"/>
<rect x="1332" y="107" width="3" height="46" fill="#c8c8c8"/>
<rect x="1337" y="128" width="1" height="41" fill="#b4b4b4"/>
<rect x="1336" y="152" width="3" height="17" fill="#c8c8c8"/>
<rect x="1341" y="163" width="1" height="40" fill="#4f8cd2"/>
<rect x="1340" y="163" width="3" height="9" fill="#3286e2"/>
<rect x="1345" y="159" width="1" height="20" fill="#4f8cd2"/>
<rect x="1344" y="159" width="3" height="7" fill="#3286e2"/>
<rect x="1349" y="159" width="1" height="13" fill="#b4b4b4"/>
<rect x="1348" y="159" width="3" height="9" fill="#c8c8c8"/>
<rect x="1353" y="142" width="1" height="30" fill="#4f8cd2"/>
<rect x="1352" y="152" width="3" height="20" fill="#3286e2"/>
<rect x="1357" y="142" width="1" height="11" fill="#4f8cd2"/>
<rect x="1356" y="142" width="3" height="11" fill="#3286e2"/>
<rect x="1361" y="107" width="1" height="30" fill="#4f8cd2"/>
<rect x="1360" y="114" width="3" height="23" fill="#3286e2"/>
<rect x="1365" y="107" width="1" height="12" fill="#4f8cd2"/>
<rect x="1364" y="107" width="3" height="8" fill="#3286e2"/>
<rect x="1369" y="100" width="1" height="11" fill="#c02424"/>
<rect x="1368" y="108" width="3" height="1" fill="#c02424"/>
<rect x="1373" y="107" width="1" height="33" fill="#b4b4b4"/>
<rect x="1372" y="110" width="3" height="30" fill="#c8c8c8"/>
<rect x="1377" y="114" width="1" height="26" fill="#4f8cd2"/>
<rect x="1376" y="117" width="3" height="23" fill="#3286e2"/>
<rect x="1381" y="107" width="1" height="24" fill="#b4b4b4"/>
<rect x="1380" y="114" width="3" height="8" fill="#c8c8c8"/>
<rect x="1385" y="110" width="1" height="11" fill="#c02424"/>
<rect x="1384" y="117" width="3" height="1" fill="#c02424"/>
<rect x="1389" y="110" width="1" height="12" fill="#4f8cd2"/>
<rect x="1388" y="110" width="3" height="12" fill="#3286e2"/>
<rect x="1393" y="107" width="1" height="9" fill="#b4b4b4"/>
<rect x="1392" y="107" width="3" height="5" fill="#c8c8c8"/>
<rect x="1397" y="89" width="1" height="27" fill="#4f8cd2"/>
<rect x="1396" y="93" width="3" height="23" fill="#3286e2"/>
<rect x="1401" y="65" width="1" height="46" fill="#4f8cd2"/>
<rect x="1400" y="68" width="3" height="31" fill="#3286e2"/>
<rect x="1405" y="47" width="1" height="48" fill="#b4b4b4"/>
<rect x="1404" y="68" width="3" height="6" fill="#c8c8c8"/>
<rect x="1409" y="72" width="1" height="78" fill="#b4b4b4"/>
<rect x="1408" y="75" width="3" height="75" fill="#c8c8c8"/>
<rect x="1413" y="131" width="1" height="20" fill="#c02424"/>
<rect x="1412" y="149" width="3" height="1" fill="#c02424"/>
<rect x="1417" y="142" width="1" height="11" fill="#c02424"/>
<rect x="1416" y="149" width="3" height="1" fill="#c02424"/>
<rect x="1421" y="149" width="1" height="19" fill="#b4b4b4"/>
<rect x="1420" y="149" width="3" height="11" fill="#c8c8c8"/>
<rect x="1425" y="159" width="1" height="54" fill="#b4b4b4"/>
<rect x="1424" y="159" width="3" height="51" fill="#c8c8c8"/>
<rect x="1429" y="198" width="1" height="22" fill="#b4b4b4"/>
<rect x="1428" y="208" width="3" height="12" fill="#c8c8c8"/>
<rect x="1433" y="201" width="1" height="19" fill="#4f8cd2"/>
<rect x="1432" y="201" width="3" height="19" fill="#3286e2"/>
<rect x="1437" y="142" width="1" height="57" fill="#4f8cd2"/>
<rect x="1436" y="156" width="3" height="43" fill="#3286e2"/>
<rect x="1441" y="159" width="1" height="34" fill="#b4b4b4"/>
<rect x="1440" y="159" width="3" height="16" fill="#c8c8c8"/>
<rect x="1445" y="159" width="1" height="30" fill="#b4b4b4"/>
<rect x="1444" y="166" width="3" height="23" fill="#c8c8c8"/>
<rect x="1449" y="177" width="1" height="12" fill="#4f8cd2"/>
<rect x="1448" y="180" width="3" height="9" fill="#3286e2"/>
<rect x="1453" y="177" width="1" height="30" fill="#b4b4b4"/>
<rect x="1452" y="184" width="3" height="19" fill="#c8c8c8"/>
<rect x="1457" y="201" width="1" height="27" fill="#b4b4b4"/>
<rect x="1456" y="201" width="3" height="22" fill="#c8c8c8"/>
<rect x="1461" y="215" width="1" height="8" fill="#b4b4b4"/>
<rect x="1460" y="219" width="3" height="4" fill="#c8c8c8"/>
<rect x="1465" y="219" width="1" height="9" fill="#4f8cd2"/>
<rect x="1464" y="219" width="3" height="4" fill="#3286e2"/>
<rect x="1469" y="191" width="1" height="30" fill="#4f8cd2"/>
<rect x="1468" y="191" width="3" height="26" fill="#3286e2"/>
<rect x="1473" y="173" width="1" height="22" fill="#4f8cd2"/>
<rect x="1472" y="180" width="3" height="9" fill="#3286e2"/>
<rect x="1477" y="173" width="1" height="9" fill="#c02424"/>
<rect x="1476" y="177" width="3" height="1" fill="#c02424"/>
<rect x="1481" y="177" width="1" height="16" fill="#b4b4b4"/>
<rect x="1480" y="177" width="3" height="16" fill="#c8c8c8"/>
<rect x="1485" y="180" width="1" height="22" fill="#4f8cd2"/>
<rect x="1484" y="180" width="3" height="22" fill="#3286e2"/>
<rect x="1489" y="177" width="1" height="8" fill="#b4b4b4"/>
<rect x="1488" y="177" width="3" height="8" fill="#c8c8c8"/>
<rect x="1493" y="177" width="1" height="30" fill="#b4b4b4"/>
<rect x="1492" y="180" width="3" height="23" fill="#c8c8c8"/>
<rect x="1497" y="177" width="1" height="46" fill="#4f8cd2"/>
<rect x="1496" y="201" width="3" height="5" fill="#3286e2"/>
<rect x="1501" y="173" width="1" height="40" fill="#b4b4b4"/>
<rect x="1500" y="201" width="3" height="12" fill="#c8c8c8"/>
<rect x="1505" y="198" width="1" height="19" fill="#4f8cd2"/>
<rect x="1504" y="198" width="3" height="12" fill="#3286e2"/>
<rect x="1509" y="184" width="1" height="43" fill="#4f8cd2"/>
<rect x="1508" y="184" width="3" height="19" fill="#3286e2"/>
<rect x="1513" y="177" width="1" height="12" fill="#b4b4b4"/>
<rect x="1512" y="181" width="3" height="8" fill="#c8c8c8"/>
<rect x="1517" y="180" width="1" height="69" fill="#b4b4b4"/>
<rect x="1516" y="188" width="3" height="57" fill="#c8c8c8"/>
<rect x="1521" y="233" width="1" height="58" fill="#b4b4b4"/>
<rect x="1520" y="240" width="3" height="44" fill="#c8c8c8"/>
<rect x="1525" y="275" width="1" height="19" fill="#c02424"/>
<rect x="1524" y="286" width="3" height="1" fill="#c02424"/>
<rect x="1529" y="264" width="1" height="27" fill="#4f8cd2"/>
<rect x="1528" y="264" width="3" height="27" fill="#3286e2"/>
<rect x="1533" y="261" width="1" height="26" fill="#b4b4b4"/>
<rect x="1532" y="264" width="3" height="13" fill="#c8c8c8"/>
<rect x="1537" y="236" width="1" height="41" fill="#4f8cd2"/>
<rect x="1536" y="261" width="3" height="16" fill="#3286e2"/>
<rect x="1541" y="236" width="1" height="34" fill="#4f8cd2"/>
<rect x="1540" y="247" width="3" height="19" fill="#3286e2"/>
<rect x="1545" y="229" width="1" height="20" fill="#4f8cd2"/>
<rect x="1544" y="240" width="3" height="5" fill="#3286e2"/>
<rect x="1549" y="233" width="1" height="18" fill="#4f8cd2"/>
<rect x="1548" y="241" width="3" height="4" fill="#3286e2"/>
<rect x="1553" y="247" width="1" height="23" fill="#b4b4b4"/>
<rect x="1552" y="247" width="3" height="19" fill="#c8c8c8"/>
<rect x="1557" y="261" width="1" height="12" fill="#b4b4b4"/>
<rect x="1556" y="261" width="3" height="9" fill="#c8c8c8"/>
<rect x="1561" y="240" width="1" height="26" fill="#4f8cd2"/>
<rect x="1560" y="258" width="3" height="8" fill="#3286e2"/>
<rect x="1565" y="240" width="1" height="19" fill="#4f8cd2"/>
<rect x="1564" y="243" width="3" height="6" fill="#3286e2"/>
<rect x="1569" y="236" width="1" height="34" fill="#b4b4b4"/>
<rect x="1568" y="243" width="3" height="23" fill="#c8c8c8"/>
<rect x="1573" y="261" width="1" height="9" fill="#b4b4b4"/>
<rect x="1572" y="264" width="3" height="6" fill="#c8c8c8"/>
<rect x="1577" y="268" width="1" height="23" fill="#b4b4b4"/>
<rect x="1576" y="268" width="3" height="16" fill="#c8c8c8"/>
<rect x="1581" y="275" width="1" height="12" fill="#b4b4b4"/>
<rect x="1580" y="282" width="3" height="5" fill="#c8c8c8"/>
<rect x="1585" y="278" width="1" height="20" fill="#b4b4b4"/>
<rect x="1584" y="282" width="3" height="9" fill="#c8c8c8"/>
<rect x="1589" y="285" width="1" height="8" fill="#c02424"/>
<rect x="1588" y="289" width="3" height="1" fill="#c02424"/>
<rect x="1593" y="289" width="1" height="26" fill="#b4b4b4"/>
<rect x="1592" y="289" width="3" height="23" fill="#c8c8c8"/>
<rect x="1597" y="306" width="1" height="6" fill="#4f8cd2"/>
<rect x="1596" y="306" width="3" height="6" fill="#3286e2"/>
<rect x="1601" y="281" width="1" height="34" fill="#b4b4b4"/>
<rect x="1600" y="306" width="3" height="9" fill="#c8c8c8"/>
<rect x="1605" y="306" width="1" height="9" fill="#4f8cd2"/>
<rect x="1604" y="310" width="3" height="5" fill="#3286e2"/>
<rect x="1609" y="303" width="1" height="12" fill="#4f8cd2"/>
<rect x="1608" y="303" width="3" height="9" fill="#3286e2"/>
<rect x="1613" y="303" width="1" height="12" fill="#b4b4b4"/>
<rect x="1612" y="303" width="3" height="12" fill="#c8c8c8"/>
<rect x="1617" y="310" width="1" height="29" fill="#b4b4b4"/>
<rect x="1616" y="310" width="3" height="16" fill="#c8c8c8"/>
<rect x="1621" y="324" width="1" height="9" fill="#c02424"/>
<rect x="1620" y="328" width="3" height="1" fill="#c02424"/>
<rect x="1625" y="310" width="1" height="26" fill="#b4b4b4"/>
<rect x="1624" y="327" width="3" height="5" fill="#c8c8c8"/>
<rect x="1629" y="320" width="1" height="19" fill="#b4b4b4"/>
<rect x="1628" y="331" width="3" height="5" fill="#c8c8c8"/>
<rect x="1633" y="334" width="1" height="23" fill="#b4b4b4"/>
<rect x="1632" y="334" width="3" height="23" fill="#c8c8c8"/>
<rect x="1637" y="344" width="1" height="13" fill="#4f8cd2"/>
<rect x="1636" y="348" width="3" height="5" fill="#3286e2"/>
<rect x="1641" y="346" width="1" height="21" fill="#b4b4b4"/>
<rect x="1640" y="348" width="3" height="16" fill="#c8c8c8"/>
<rect x="1645" y="320" width="1" height="47" fill="#4f8cd2"/>
<rect x="1644" y="342" width="3" height="22" fill="#3286e2"/>
<rect x="1649" y="320" width="1" height="33" fill="#4f8cd2"/>
<rect x="1648" y="330" width="3" height="16" fill="#3286e2"/>
<rect x="1653" y="327" width="1" height="26" fill="#b4b4b4"/>
<rect x="1652" y="327" width="3" height="26" fill="#c8c8c8"/>
<rect x="1657" y="320" width="1" height="44" fill="#4f8cd2"/>
<rect x="1656" y="333" width="3" height="20" fill="#3286e2"/>
<rect x="1661" y="296" width="1" height="34" fill="#4f8cd2"/>
<rect x="1660" y="303" width="3" height="27" fill="#3286e2"/>
<rect x="1665" y="282" width="1" height="23" fill="#c02424"/>
<rect x="1664" y="299" width="3" height="1" fill="#c02424"/>
<rect x="1669" y="296" width="1" height="9" fill="#c02424"/>
<rect x="1668" y="299" width="3" height="1" fill="#c02424"/>
<rect x="1673" y="282" width="1" height="25" fill="#4f8cd2"/>
<rect x="1672" y="282" width="3" height="19" fill="#3286e2"/>
<rect x="1677" y="282" width="1" height="9" fill="#b4b4b4"/>
<rect x="1676" y="282" width="3" height="9" fill="#c8c8c8"/>
<rect x="1681" y="282" width="1" height="8" fill="#c02424"/>
<rect x="1680" y="286" width="3" height="1" fill="#c02424"/>
<rect x="1685" y="285" width="1" height="5" fill="#4f8cd2"/>
<rect x="1684" y="285" width="3" height="5" fill="#3286e2"/>
<rect x="1689" y="282" width="1" height="23" fill="#b4b4b4"/>
<rect x="1688" y="285" width="3" height="5" fill="#c8c8c8"/>
<rect x="1693" y="285" width="1" height="7" fill="#b4b4b4"/>
<rect x="1692" y="285" width="3" height="7" fill="#c8c8c8"/>
<rect x="1697" y="289" width="1" height="16" fill="#b4b4b4"/>
<rect x="1696" y="289" width="3" height="16" fill="#c8c8c8"/>
<rect x="1701" y="302" width="1" height="7" fill="#b4b4b4"/>
<rect x="1700" y="302" width="3" height="7" fill="#c8c8c8"/>
<rect x="1705" y="285" width="1" height="30" fill="#4f8cd2"/>
<rect x="1704" y="285" width="3" height="24" fill="#3286e2"/>
<rect x="1709" y="229" width="1" height="57" fill="#4f8cd2"/>
<rect x="1708" y="264" width="3" height="19" fill="#3286e2"/>
<rect x="1713" y="254" width="1" height="16" fill="#4f8cd2"/>
<rect x="1712" y="264" width="3" height="6" fill="#3286e2"/>
<rect x="1717" y="250" width="1" height="20" fill="#4f8cd2"/>
<rect x="1716" y="257" width="3" height="6" fill="#3286e2"/>
<rect x="1721" y="257" width="1" height="29" fill="#b4b4b4"/>
<rect x="1720" y="257" width="3" height="23" fill="#c8c8c8"/>
<rect x="1725" y="276" width="1" height="14" fill="#b4b4b4"/>
<rect x="1724" y="279" width="3" height="4" fill="#c8c8c8"/>
<rect x="1729" y="275" width="1" height="8" fill="#b4b4b4"/>
<rect x="1728" y="278" width="3" height="3" fill="#c8c8c8"/>
<rect x="1733" y="247" width="1" height="36" fill="#4f8cd2"/>
<rect x="1732" y="247" width="3" height="30" fill="#3286e2"/>
<rect x="1737" y="236" width="1" height="20" fill="#4f8cd2"/>
<rect x="1736" y="236" width="3" height="16" fill="#3286e2"/>
<rect x="1741" y="233" width="1" height="19" fill="#4f8cd2"/>
<rect x="1740" y="233" width="3" height="5" fill="#3286e2"/>
<rect x="1745" y="233" width="1" height="9" fill="#c02424"/>
<rect x="1744" y="233" width="3" height="1" fill="#c02424"/>
<rect x="1749" y="233" width="1" height="32" fill="#b4b4b4"/>
<rect x="1748" y="233" width="3" height="32" fill="#c8c8c8"/>
<rect x="1753" y="266" width="1" height="17" fill="#b4b4b4"/>
<rect x="1752" y="266" width="3" height="14" fill="#c8c8c8"/>
<rect x="1757" y="285" width="1" height="16" fill="#b4b4b4"/>
<rect x="1756" y="285" width="3" height="2" fill="#c8c8c8"/>
<rect x="1761" y="286" width="1" height="19" fill="#c02424"/>
<rect x="1760" y="289" width="3" height="1" fill="#c02424"/>
<rect x="1765" y="292" width="1" height="20" fill="#b4b4b4"/>
<rect x="1764" y="292" width="3" height="5" fill="#c8c8c8"/>
<rect x="1769" y="289" width="1" height="23" fill="#b4b4b4"/>
<rect x="1768" y="299" width="3" height="6" fill="#c8c8c8"/>
<rect x="1773" y="285" width="1" height="23" fill="#4f8cd2"/>
<rect x="1772" y="289" width="3" height="19" fill="#3286e2"/>
<rect x="1777" y="285" width="1" height="27" fill="#b4b4b4"/>
<rect x="1776" y="289" width="3" height="16" fill="#c8c8c8"/>
<rect x="1781" y="299" width="1" height="27" fill="#c02424"/>
<rect x="1780" y="306" width="3" height="1" fill="#c02424"/>
<rect x="1785" y="303" width="1" height="23" fill="#c02424"/>
<rect x="1784" y="306" width="3" height="1" fill="#c02424"/>
<rect x="1789" y="286" width="1" height="22" fill="#4f8cd2"/>
<rect x="1788" y="286" width="3" height="22" fill="#3286e2"/>
<rect x="1793" y="289" width="1" height="16" fill="#b4b4b4"/>
<rect x="1792" y="289" width="3" height="12" fill="#c8c8c8"/>
<rect x="1797" y="289" width="1" height="23" fill="#4f8cd2"/>
<rect x="1796" y="289" width="3" height="16" fill="#3286e2"/>
<rect x="1801" y="286" width="1" height="29" fill="#b4b4b4"/>
<rect x="1800" y="296" width="3" height="16" fill="#c8c8c8"/>
<rect x="1805" y="289" width="1" height="40" fill="#b4b4b4"/>
<rect x="1804" y="310" width="3" height="12" fill="#c8c8c8"/>
<rect x="1809" y="320" width="1" height="9" fill="#b4b4b4"/>
<rect x="1808" y="320" width="3" height="9" fill="#c8c8c8"/>
<rect x="1812" y="327" width="3" height="1" fill="#c02424"/>
<rect x="1817" y="324" width="1" height="5" fill="#b4b4b4"/>
<rect x="1816" y="324" width="3" height="5" fill="#c8c8c8"/>
<rect x="1821" y="328" width="1" height="22" fill="#b4b4b4"/>
<rect x="1820" y="328" width="3" height="22" fill="#c8c8c8"/>
<rect x="1825" y="348" width="1" height="30" fill="#b4b4b4"/>
<rect x="1824" y="351" width="3" height="22" fill="#c8c8c8"/>
<rect x="1829" y="351" width="1" height="22" fill="#4f8cd2"/>
<rect x="1828" y="358" width="3" height="12" fill="#3286e2"/>
<rect x="1833" y="344" width="1" height="37" fill="#b4b4b4"/>
<rect x="1832" y="358" width="3" height="23" fill="#c8c8c8"/>
<rect x="1837" y="376" width="1" height="19" fill="#c02424"/>
<rect x="1836" y="376" width="3" height="1" fill="#c02424"/>
<rect x="1841" y="351" width="1" height="27" fill="#4f8cd2"/>
<rect x="1840" y="351" width="3" height="22" fill="#3286e2"/>
<rect x="1845" y="351" width="1" height="22" fill="#b4b4b4"/>
<rect x="1844" y="355" width="3" height="15" fill="#c8c8c8"/>
<rect x="1849" y="358" width="1" height="15" fill="#b4b4b4"/>
<rect x="1848" y="362" width="3" height="8" fill="#c8c8c8"/>
<rect x="1853" y="362" width="1" height="11" fill="#c02424"/>
<rect x="1852" y="369" width="3" height="1" fill="#c02424"/>
<rect x="1861" y="370" width="1" height="22" fill="#b4b4b4"/>
<rect x="1860" y="370" width="3" height="18" fill="#c8c8c8"/>
<rect x="1865" y="383" width="1" height="9" fill="#c02424"/>
<rect x="1864" y="391" width="3" height="1" fill="#c02424"/>
<rect x="1869" y="390" width="1" height="23" fill="#b4b4b4"/>
<rect x="1868" y="393" width="3" height="9" fill="#c8c8c8"/>
</g>
<g id="lines" fill="none" stroke-linejoin="round" stroke-linecap="round" shape-rendering="crispEdges">
<polyline points="5.0,492.2 9.4,493.5 13.8,497.9 17.5,501.6 21.9,505.4 26.9,507.2 31.2,511.0 36.2,512.9 41.2,513.2 45.6,512.2" stroke="#d01c44" stroke-width="3" stroke-linecap="butt"/>
<polyline points="45.6,512.2 47.5,511.2 53.1,511.0 56.9,514.1 60.2,518.1" stroke="#d0d0d0" stroke-width="3" stroke-linecap="butt"/>
<polyline points="60.2,518.1 65.0,522.2 68.1,524.1 75.0,531.0 81.2,537.9 83.4,540.0 87.5,545.6 93.8,551.9 100.0,556.9 106.2,561.2 112.5,565.6 117.5,568.5 122.8,570.9" stroke="#d01c44" stroke-width="3" stroke-linecap="butt"/>
<polyline points="122.8,570.9 125.0,571.9 137.5,572.2 152.2,572.2" stroke="#d0d0d0" stroke-width="3" stroke-linecap="butt"/>
<polyline points="152.2,572.2 155.0,571.2 162.5,569.4 168.8,567.8 175.0,566.5 181.9,565.4" stroke="#3cc843" stroke-width="3" stroke-linecap="butt"/>
<polyline points="181.9,565.4 186.2,568.1 192.5,571.5 200.0,575.0 205.0,576.9" stroke="#d0d0d0" stroke-width="3" stroke-linecap="butt"/>
<polyline points="205.0,576.9 210.0,579.0 213.8,579.0 217.5,576.2 220.6,573.1" stroke="#d01c44" stroke-width="3" stroke-linecap="butt"/>
<polyline points="220.6,573.2 225.0,572.8 231.2,568.1 239.8,560.6" stroke="#3cc843" stroke-width="3" stroke-linecap="butt"/>
<polyline points="237.5,561.2 240.0,559.4 246.2,553.8 252.5,549.4 258.8,546.2 265.0,544.4 271.2,542.2 277.5,540.6" stroke="#3cc843" stroke-width="3" stroke-linecap="butt"/>
<polyline points="277.5,540.6 282.5,539.0 287.5,537.5 292.5,534.6 296.2,532.5" stroke="#d0d0d0" stroke-width="3" stroke-linecap="butt"/>
<polyline points="296.2,532.5 302.5,529.8 308.8,526.9 315.0,524.0 318.8,523.5 326.2,523.8" stroke="#3cc843" stroke-width="3" stroke-linecap="butt"/>
<polyline points="326.2,524.0 330.0,524.0 335.0,521.9 341.2,519.4 347.5,516.9" stroke="#d0d0d0" stroke-width="3" stroke-linecap="butt"/>
<polyline points="347.5,516.9 352.5,515.0 358.8,514.0 365.0,513.8 371.2,513.1 377.5,512.8 383.8,512.5 390.0,511.6 396.2,511.0 402.5,510.6 408.8,510.0 411.9,510.2" stroke="#3cc843" stroke-width="3" stroke-linecap="butt"/>
<polyline points="437.5,510.2 440.0,511.2 446.2,513.8 452.5,517.2 458.8,518.8 465.0,520.6 470.0,522.2 475.0,521.9 478.8,521.5 482.5,522.2" stroke="#d01c44" stroke-width="3" stroke-linecap="butt"/>
<polyline points="500.0,517.2 505.0,518.5 510.0,517.2 515.0,515.6 520.0,515.0 525.0,513.8 530.0,512.5 535.0,508.5 540.0,505.6 545.0,503.5 551.2,499.8" stroke="#3cc843" stroke-width="3" stroke-linecap="butt"/>
<polyline points="1251.9,271.2 1258.8,263.8 1266.2,255.9 1272.5,248.8 1278.8,240.0 1285.0,231.2 1291.2,223.8 1297.5,216.2 1303.8,208.8 1310.0,201.9 1315.0,196.9 1318.8,190.0 1322.5,182.5 1326.2,176.2 1330.0,171.9 1336.2,169.0 1341.9,166.2" stroke="#3cc843" stroke-width="3" stroke-linecap="butt"/>
<polyline points="1341.9,166.2 1348.8,163.8 1355.0,160.6 1360.0,156.2 1365.0,151.9 1370.0,148.1" stroke="#d0d0d0" stroke-width="3" stroke-linecap="butt"/>
<polyline points="1370.0,148.1 1375.0,145.6 1380.0,143.1 1385.6,140.6 1390.0,137.5 1395.0,134.4 1400.0,129.4 1405.0,124.4 1408.8,125.6 1415.0,126.0 1420.0,127.5" stroke="#3cc843" stroke-width="3" stroke-linecap="butt"/>
<polyline points="1428.8,135.0 1432.5,138.8 1436.2,140.0 1442.5,141.9 1450.0,145.0 1456.2,150.6 1461.2,155.6 1466.2,159.8 1470.0,161.5" stroke="#d01c44" stroke-width="3" stroke-linecap="butt"/>
<polyline points="1468.8,161.5 1470.0,161.9 1477.5,165.0 1486.2,168.8" stroke="#d01c44" stroke-width="3" stroke-linecap="butt"/>
<polyline points="1486.2,168.8 1492.5,171.9 1498.8,175.0 1501.2,177.2 1507.5,179.4 1513.1,181.9 1516.2,185.6" stroke="#d0d0d0" stroke-width="3" stroke-linecap="butt"/>
<polyline points="1516.2,185.6 1521.2,190.0 1526.2,196.2 1532.5,203.1 1538.8,208.8 1545.0,213.1 1551.2,216.9 1557.5,222.5 1563.8,226.2 1570.0,230.0 1575.0,232.5 1580.0,237.5 1585.0,241.9 1590.0,245.6 1590.0,247.5 1595.0,253.1 1601.2,258.1 1607.5,263.1 1613.8,268.8 1620.0,274.4 1626.2,280.6 1632.5,287.5 1638.8,293.8 1645.0,300.0 1651.2,305.0 1657.5,309.4 1661.9,310.6" stroke="#d01c44" stroke-width="3" stroke-linecap="butt"/>
<polyline points="1661.9,310.6 1667.5,311.2 1675.0,310.4 1681.2,309.5" stroke="#d0d0d0" stroke-width="3" stroke-linecap="butt"/>
<polyline points="1678.8,309.5 1680.0,309.4 1687.5,309.0 1692.5,308.5" stroke="#d0d0d0" stroke-width="3" stroke-linecap="butt"/>
<polyline points="1692.5,308.5 1697.5,309.0 1702.5,309.4 1707.5,306.9 1712.5,304.4 1717.5,302.5 1722.5,301.0 1730.0,299.4 1735.0,295.6 1740.0,291.2 1745.0,287.5 1750.0,285.0 1755.0,284.0 1761.9,282.5" stroke="#3cc843" stroke-width="3" stroke-linecap="butt"/>
<polyline points="1761.9,282.5 1767.5,283.1 1775.0,283.8 1781.2,283.8 1787.5,283.8" stroke="#d0d0d0" stroke-width="3" stroke-linecap="butt"/>
<polyline points="1787.5,283.5 1792.5,283.5 1798.8,283.5 1805.0,286.2 1811.2,289.4 1820.0,293.1 1826.2,300.0 1832.5,306.2 1837.5,310.6 1843.8,314.4 1850.0,320.0 1856.2,325.0 1862.5,331.2 1867.5,336.2 1870.2,339.0" stroke="#d01c44" stroke-width="3" stroke-linecap="butt"/>
<polyline points="5.0,496.6 9.4,499.8 12.5,502.2 15.6,507.2 18.8,512.9 21.9,519.1 25.0,521.6 28.8,525.4 31.9,529.8 35.0,530.4 40.0,530.1 43.8,529.1 47.5,526.0 51.2,523.5 53.1,522.9 55.0,525.4 58.8,532.2 62.5,537.9 65.0,540.6 68.8,545.0 75.0,551.9 81.2,560.0 87.5,568.1 93.8,576.2 100.0,582.5 106.2,587.5 112.5,591.2 118.8,593.1 125.0,592.5 131.2,590.0 137.5,585.0 143.8,580.6 150.0,575.0 156.2,568.8 162.5,563.1 168.8,558.1 175.0,554.4 179.4,553.1 182.5,554.4 186.2,558.8 192.5,565.0 200.0,572.5 206.2,578.8 211.2,583.1 215.0,583.1 218.8,580.0 225.0,571.2 231.2,562.5 239.8,551.9" stroke="#fbe04a" stroke-width="1.8"/>
<polyline points="237.5,555.0 240.0,551.9 246.2,543.8 252.5,535.6 258.8,531.2 265.0,527.5 271.2,523.8 275.0,521.9 281.2,521.0 286.2,520.6 292.5,518.1 298.8,516.2 305.0,515.0 311.2,513.1 316.2,511.9 320.0,514.4 325.0,517.2 330.0,518.1 335.0,516.5 340.0,515.0 346.2,513.1 352.5,511.9 358.8,511.9 365.0,512.5 371.2,511.2 377.5,510.6 383.8,510.2 390.0,509.4 396.2,508.8 402.5,508.1 408.8,507.5 415.0,509.4 421.2,510.6 427.5,510.6 433.8,510.6 440.0,510.6" stroke="#fbe04a" stroke-width="1.8"/>
<polyline points="437.5,510.6 440.0,511.9 445.0,516.2 450.0,521.2 455.0,525.0 460.0,526.9 465.0,528.8 470.0,530.6 475.0,529.8 480.0,529.4 483.8,526.2 490.0,520.6 495.0,516.5 500.0,515.6 505.0,518.5 510.0,515.0 515.0,512.5 520.0,510.6 525.0,507.5 530.0,505.6 535.0,496.2 540.0,492.5 545.0,488.1 551.2,482.2" stroke="#fbe04a" stroke-width="1.8"/>
<polyline points="1251.9,247.5 1253.1,246.2 1257.5,243.1 1261.2,236.2 1266.2,231.2 1271.2,226.2 1276.2,217.5 1280.0,210.0 1283.8,201.2 1287.5,193.8 1292.5,185.0 1297.5,177.5 1303.8,171.2 1308.8,166.2 1312.5,163.8 1316.2,158.8 1320.0,148.8 1323.8,140.0 1327.5,135.0 1331.2,132.8 1336.2,133.8 1341.2,136.2 1346.2,138.8 1350.0,139.8 1358.8,139.8 1362.5,137.5 1367.5,133.8 1372.5,132.5 1377.5,131.0 1382.5,129.4 1387.5,127.5 1392.5,125.0 1397.5,121.2 1401.2,116.2 1405.0,112.8 1408.8,113.8 1412.5,116.2 1416.2,118.8 1420.0,121.0 1422.5,125.0 1426.2,132.5 1430.0,140.0 1433.1,145.0 1437.5,147.5 1442.5,152.5 1447.5,158.8 1452.5,164.4 1456.2,172.5 1460.0,178.8 1463.8,183.8 1468.8,188.1 1470.6,189.0" stroke="#fbe04a" stroke-width="1.8"/>
<polyline points="1468.8,189.1 1470.0,189.4 1476.2,190.6 1482.5,191.9 1486.2,191.2 1492.5,193.1 1498.8,195.6 1503.8,196.2 1510.0,195.0 1513.8,194.4 1516.9,198.8 1520.0,205.0 1523.8,212.5 1528.8,220.0 1533.8,226.9 1538.8,231.9 1543.8,235.0 1548.8,237.5 1552.5,241.2 1557.5,245.6 1562.5,248.8 1565.0,250.0 1570.0,252.5 1576.2,257.5 1582.5,262.5 1588.8,267.5 1595.0,273.1 1601.2,279.4 1607.5,285.6 1613.8,291.2 1620.0,297.5 1626.2,303.8 1631.2,308.8 1635.0,315.0 1638.8,321.2 1643.8,327.5 1648.8,331.0 1653.8,332.8 1658.8,332.5 1663.8,330.0 1670.0,326.2 1676.2,321.2 1680.6,317.2" stroke="#fbe04a" stroke-width="1.8"/>
<polyline points="1678.8,320.0 1680.0,318.8 1686.2,312.5 1692.5,308.1 1697.5,306.2 1702.5,304.4 1707.5,298.8 1712.5,293.8 1717.5,288.8 1722.5,285.6 1730.0,283.8 1735.0,278.8 1740.0,271.2 1745.0,265.6 1750.0,264.4 1755.0,265.0 1760.0,267.2 1765.0,270.0 1770.0,272.5 1776.2,276.2 1782.5,281.2 1788.8,285.0 1795.0,287.5 1800.0,290.0 1805.0,296.2 1811.2,301.2 1817.5,307.5 1823.8,316.2 1826.2,320.0 1830.0,325.0 1836.2,334.4 1842.5,340.0 1848.8,346.2 1855.0,351.9 1858.8,355.0 1863.8,361.2 1867.5,366.2 1869.8,368.5" stroke="#fbe04a" stroke-width="1.8"/>
<polyline points="5.0,507.2 8.8,508.5 12.5,512.9 15.6,521.0 18.8,532.2 21.2,540.0 25.0,541.9 30.0,545.0 33.1,548.5 36.2,545.6 41.2,541.0 43.8,536.0 47.5,527.2 51.2,518.5 53.1,514.8 55.0,518.5 58.8,529.8 62.5,538.5 65.0,545.6 70.0,553.8 75.0,565.0 81.2,577.5 87.5,588.8 93.8,598.8 96.9,602.1 103.8,602.1 108.8,602.5 115.0,600.6 121.2,595.6 127.5,586.9 133.8,577.5 140.0,568.8 146.2,561.2 152.5,555.6 158.8,551.2 165.0,548.1 171.2,545.6 181.2,546.2 183.1,552.5 186.2,562.5 192.5,576.2 200.0,590.0 206.2,598.8 210.0,601.9 213.8,600.0 217.5,590.0 221.2,575.0 225.0,562.5 231.2,545.0 233.8,540.0 237.5,531.0 239.8,526.6" stroke="#28f6fa" stroke-width="1.8"/>
<polyline points="237.5,530.0 240.0,526.9 243.8,520.0 247.5,513.8 251.2,510.2 255.0,510.0 258.8,511.9 263.8,515.0 268.8,518.1 273.8,520.0 278.8,521.9 283.8,523.5 287.5,522.5 292.5,518.8 298.8,515.6 305.0,512.5 311.2,508.8 315.0,506.2 318.1,506.2 321.2,511.2 325.0,516.9 328.8,520.6 332.5,520.0 337.5,517.5 343.8,514.4 350.0,511.2 353.8,510.6 358.8,512.5 363.8,513.1 368.8,510.6 375.0,509.8 381.2,509.0 387.5,508.1 393.8,507.2 400.0,506.5 406.2,506.0 409.4,505.6 412.5,510.0 416.2,511.9 421.2,513.8 425.0,512.5 430.0,512.8 435.0,512.5" stroke="#28f6fa" stroke-width="1.8"/>
<polyline points="437.5,512.5 440.0,513.8 445.0,518.8 450.0,527.5 455.0,532.5 460.0,536.0 465.0,536.5 469.4,540.6 473.8,536.2 478.8,532.5 482.5,526.2 487.5,517.5 492.5,506.2 496.2,502.5 500.0,503.1 505.0,508.8 510.0,505.6 513.8,502.5 517.5,505.0 522.5,503.1 527.5,501.9 531.2,497.5 536.2,486.9 541.2,481.9 546.2,475.0 551.2,468.5" stroke="#28f6fa" stroke-width="1.8"/>
<polyline points="1251.9,236.9 1253.1,235.6 1257.5,231.2 1261.2,220.0 1265.0,216.2 1270.0,213.8 1273.8,205.0 1277.5,195.0 1281.2,183.8 1285.0,171.2 1288.8,163.8 1293.8,157.5 1298.8,153.1 1305.0,150.0 1310.0,147.5 1313.8,145.6 1315.0,143.8 1317.5,135.0 1321.2,125.0 1325.0,118.8 1329.4,114.6 1332.5,116.9 1336.2,125.0 1340.0,131.2 1345.0,138.8 1350.0,146.2 1353.8,149.4 1357.5,149.8 1361.2,145.0 1365.0,138.8 1368.8,133.1 1372.5,131.9 1377.5,126.2 1382.5,122.5 1387.5,119.4 1392.5,116.2 1397.5,111.9 1401.2,103.8 1405.0,97.8 1408.1,101.2 1411.2,108.1 1415.0,115.0 1418.8,121.2 1421.2,127.5 1423.8,137.5 1425.0,140.0 1427.5,150.0 1430.0,161.2 1433.1,172.8 1437.5,173.5 1441.2,176.2 1446.2,180.0 1451.2,183.8 1455.0,190.0 1460.0,197.5 1465.0,203.1 1468.8,203.1 1470.6,201.9" stroke="#28f6fa" stroke-width="1.8"/>
<polyline points="1468.8,203.1 1470.0,201.9 1475.0,197.5 1480.0,194.4 1485.0,192.5 1490.0,190.2 1495.0,191.2 1500.0,195.0 1505.0,196.0 1510.0,193.8 1513.8,193.8 1516.9,200.0 1520.0,210.0 1523.8,223.8 1527.5,235.0 1532.5,246.2 1535.0,253.8 1537.5,256.2 1542.5,256.5 1547.5,255.6 1552.5,256.2 1557.5,258.1 1561.2,257.5 1566.2,253.1 1571.2,255.6 1576.2,261.2 1581.2,266.9 1586.2,272.5 1591.2,278.1 1595.0,285.0 1600.0,292.5 1605.0,299.4 1610.0,302.5 1615.0,307.5 1620.0,313.8 1625.0,320.0 1630.0,326.2 1635.0,332.5 1640.0,339.4 1643.8,342.5 1648.8,342.2 1652.5,343.8 1656.2,344.0 1660.0,338.8 1663.8,331.2 1668.8,322.5 1673.8,312.5 1678.8,303.8 1680.6,301.2" stroke="#28f6fa" stroke-width="1.8"/>
<polyline points="1678.8,305.6 1680.0,303.8 1685.0,296.2 1690.0,291.2 1693.8,290.0 1697.5,291.9 1700.6,295.0 1703.8,295.6 1707.5,291.2 1712.5,285.0 1717.5,279.4 1721.2,278.1 1726.2,277.5 1730.0,275.6 1733.8,270.0 1737.5,262.5 1742.5,255.0 1746.2,251.2 1748.8,251.9 1753.8,257.5 1760.0,265.0 1766.2,273.8 1771.2,281.2 1776.2,285.0 1780.0,291.9 1785.0,298.1 1788.8,298.5 1793.8,298.1 1797.5,296.9 1801.2,299.4 1806.2,306.2 1811.2,310.6 1816.2,315.0 1820.0,320.0 1823.8,328.8 1827.5,335.6 1831.2,342.5 1835.0,353.8 1838.8,357.5 1842.5,360.0 1847.5,363.8 1852.5,366.2 1857.5,368.1 1861.2,371.2 1865.0,375.6 1869.8,380.2" stroke="#28f6fa" stroke-width="1.8"/>
</g>
<g id="arrows">
<path d="M224.03 462.00 L227.22 462.00 L227.22 468.35 L230.62 465.85 L231.62 466.75 L231.62 469.35 L225.62 475.50 L219.62 469.35 L219.62 466.75 L220.62 465.85 L224.03 468.35 Z" fill="#ff0a0a"/>
<path d="M123.78 555.50 L126.97 555.50 L126.97 561.85 L130.38 559.35 L131.38 560.25 L131.38 562.85 L125.38 569.00 L119.38 562.85 L119.38 560.25 L120.38 559.35 L123.78 561.85 Z" fill="#ff0a0a"/>
<path d="M271.15 553.25 L274.35 553.25 L274.35 546.90 L277.75 549.40 L278.75 548.50 L278.75 545.90 L272.75 539.75 L266.75 545.90 L266.75 548.50 L267.75 549.40 L271.15 546.90 Z" fill="#32cd32"/>
<path d="M1423.15 254.25 L1426.35 254.25 L1426.35 247.90 L1429.75 250.40 L1430.75 249.50 L1430.75 246.90 L1424.75 240.75 L1418.75 246.90 L1418.75 249.50 L1419.75 250.40 L1423.15 247.90 Z" fill="#32cd32"/>
<path d="M1484.28 150.75 L1487.47 150.75 L1487.47 157.10 L1490.88 154.60 L1491.88 155.50 L1491.88 158.10 L1485.88 164.25 L1479.88 158.10 L1479.88 155.50 L1480.88 154.60 L1484.28 157.10 Z" fill="#ff0a0a"/>
</g></g>
<clipPath id="cpS"><rect x="5" y="673" width="1867" height="231"/></clipPath><g clip-path="url(#cpS)">
<g id="stoch" fill="none" stroke="#ffffff" stroke-width="1" stroke-linejoin="round" shape-rendering="crispEdges">
<polyline points="5,870.0 9,861.9 13,860.6 17,854.4 21,855.2 25,842.9 29,822.5 33,795.6 37,777.3 41,765.6 45,745.6 49,727.3 53,712.1 57,733.5 61,769.8 65,819.8 69,840.0 73,847.1 77,841.7 81,845.2 85,849.4 89,854.4 93,860.6 97,868.3 101,866.5 105,848.1 109,800.8 113,753.3 117,712.7 121,698.8 125,693.1 129,693.1 133,693.1 137,693.1 141,693.1 145,694.6 149,704.8 153,725.8 157,751.7 161,773.5 165,787.1 169,794.7 173,800.1 177,808.2 181,826.0 185,851.7 189,869.6 193,877.9 197,875.4 201,877.7 205,879.6 209,879.6 213,869.0 217,838.3 221,778.8 225,733.1 229,710.2 233,720.4 237,722.5 241,718.3 245,711.2 249,707.5 253,712.9 257,731.0 261,767.5 265,810.4 269,845.0 273,857.7 277,856.0 281,849.5 285,847.0 289,829.9 293,801.0 297,763.3 301,745.8 305,745.0 309,755.8 313,764.6 317,772.9 321,789.4 325,814.2 329,841.9 333,844.6 337,826.2 341,784.4 345,752.9 349,730.4 353,725.0 357,728.1 361,742.1 365,759.4 369,763.5 373,754.8 377,746.7 381,745.6 385,746.9 389,743.1 393,740.8 397,742.1 401,743.5 405,740.8 409,738.8 413,749.8 417,769.2 421,789.4 425,780.8 429,767.5 433,749.4 437,750.2 441,751.9 445,766.0 449,793.8 453,830.0 457,847.9 461,845.4 465,825.4 469,812.1 473,800.8 477,789.4 481,772.3 485,753.8 489,746.0 493,737.9 497,739.0 501,743.1 505,765.8 509,780.0 513,778.3 517,763.1 521,749.8 525,744.8 529,739.6 533,733.5 537,732.1 541,739.6 545,756.9 549,773.8 553,778.8 557,787.1 561,801.9 565,829.6 569,852.9 573,859.0 577,845.8 581,814.2 585,787.2 589,769.2 593,760.8 597,760.8 601,769.2 605,785.8 609,805.3 613,820.2 617,824.4 621,809.8 625,791.6 629,775.9 633,768.1 637,760.3 641,756.1 645,755.6 649,758.8 653,761.9 657,768.1 661,777.5 665,795.4 669,820.0 673,836.7 677,841.0 681,829.0 685,812.3 689,795.2 693,780.6 697,771.2 701,761.9 705,757.7 709,758.8 713,765.0 717,771.2 721,781.7 725,796.2 729,813.5 733,823.1 737,825.7 741,823.2 745,824.0 749,829.6 753,831.9 757,829.0 761,814.6 765,800.1 769,785.3 773,774.4 777,763.4 781,759.8 785,763.4 789,774.4 793,785.3 797,798.9 801,811.3 805,820.4 809,828.8 813,841.8 817,860.4 821,871.2 825,872.3 829,857.5 833,842.3 837,828.5 841,819.7 845,809.0 849,794.7 853,780.6 857,766.6 861,760.3 865,761.9 869,771.2 873,780.6 877,793.1 881,806.7 885,820.4 889,829.9 893,836.0 897,837.6 901,833.5 905,821.2 909,805.8 913,790.0 917,777.5 921,765.0 925,762.2 929,769.2 933,785.8 937,804.9 941,823.3 945,835.2 949,838.5 953,840.4 957,837.7 961,826.5 965,807.5 969,790.0 973,777.5 977,765.0 981,759.8 985,761.9 989,771.2 993,780.6 997,793.1 1001,807.5 1005,825.8 1009,833.3 1013,826.2 1017,807.9 1021,790.0 1025,777.5 1029,765.0 1033,761.5 1037,767.1 1041,781.7 1045,800.1 1049,823.3 1053,849.0 1057,866.1 1061,867.8 1065,852.6 1069,826.7 1073,801.5 1077,780.6 1081,773.3 1085,774.4 1089,789.0 1093,812.1 1097,842.5 1101,866.0 1105,877.1 1109,874.6 1113,863.5 1117,842.9 1121,815.0 1125,791.6 1129,775.9 1133,768.1 1137,760.3 1141,759.3 1145,765.0 1149,777.5 1153,794.2 1157,815.8 1161,837.7 1165,848.1 1169,851.5 1173,842.1 1177,825.4 1181,803.0 1185,785.3 1189,774.4 1193,763.4 1197,756.1 1201,752.5 1205,752.5 1209,751.7 1213,750.0 1217,747.5 1221,745.0 1225,742.5 1229,742.5 1233,745.0 1237,750.0 1241,755.0 1245,760.0 1249,765.8 1253,772.5 1257,780.4 1261,771.0 1265,762.9 1269,754.6 1273,763.1 1277,764.6 1281,752.1 1285,735.1 1289,720.3 1293,721.5 1297,730.6 1301,746.2 1305,762.9 1309,782.9 1313,804.2 1317,809.5 1321,794.0 1325,766.5 1329,754.6 1333,761.9 1337,785.4 1341,808.5 1345,826.0 1349,831.9 1353,829.6 1357,820.2 1361,799.6 1365,765.0 1369,730.6 1373,717.7 1377,727.3 1381,745.2 1385,754.8 1389,759.6 1393,759.0 1397,749.4 1401,733.3 1405,724.8 1409,742.3 1413,783.1 1417,834.2 1421,865.6 1425,879.5 1429,878.8 1433,878.1 1437,866.8 1441,842.9 1445,808.8 1449,790.4 1453,791.2 1457,813.3 1461,838.8 1465,859.4 1469,859.4 1473,838.1 1477,794.2 1481,758.1 1485,735.0 1489,734.0 1493,739.4 1497,754.6 1501,781.7 1505,800.6 1509,801.9 1513,780.2 1517,774.0 1521,791.5 1525,830.0 1529,855.4 1533,862.1 1537,852.5 1541,840.8 1545,823.8 1549,797.1 1553,771.7 1557,761.7 1561,776.7 1565,792.1 1569,802.5 1573,806.2 1577,825.4 1581,846.0 1585,861.8 1589,865.3 1593,865.8 1597,866.9 1601,869.5 1605,870.3 1609,868.9 1613,863.5 1617,856.0 1621,852.1 1625,849.2 1629,852.3 1633,857.9 1637,865.0 1641,869.2 1645,860.6 1649,840.4 1653,815.4 1657,791.2 1661,771.5 1665,750.4 1669,735.3 1673,725.1 1677,718.0 1681,710.3 1685,705.6 1689,705.2 1693,710.8 1697,736.9 1701,781.2 1705,813.3 1709,812.9 1713,786.9 1717,771.7 1721,770.4 1725,780.2 1729,793.1 1733,797.7 1737,785.2 1741,752.5 1745,719.6 1749,712.1 1753,732.5 1757,772.9 1761,811.7 1765,837.3 1769,850.4 1773,850.6 1777,851.5 1781,843.3 1785,834.0 1789,808.8 1793,783.8 1797,755.2 1801,754.0 1805,772.7 1809,809.6 1813,843.1 1817,867.5 1821,880.1 1825,882.8 1829,877.5 1833,871.8 1837,862.6 1841,848.3 1845,826.2 1849,805.4 1853,795.8 1857,792.8 1861,799.2 1865,812.2 1869,835.0"/>
<polyline points="5,870.0 9,853.8 13,858.1 17,851.2 21,856.2 25,821.2 29,790.0 33,775.6 37,766.2 41,755.0 45,715.6 49,711.2 53,709.4 57,780.0 61,820.0 65,859.4 69,840.6 73,841.2 77,843.1 81,851.2 85,853.8 89,858.1 93,870.0 97,876.9 101,852.5 105,815.0 109,735.0 113,710.0 117,693.1 121,693.1 125,693.1 129,693.1 133,693.1 137,693.1 141,693.1 145,697.5 149,723.8 153,756.2 157,775.0 161,789.4 165,796.9 169,797.8 173,805.6 177,821.2 181,851.2 185,882.5 189,875.0 193,876.2 197,875.0 201,881.9 205,881.9 209,875.0 213,850.0 217,790.0 221,696.2 225,713.1 229,721.2 233,726.9 237,719.4 241,708.8 245,705.6 249,708.1 253,725.0 257,760.0 261,817.5 265,853.8 269,863.8 273,855.6 277,848.8 281,844.0 285,848.1 289,797.5 293,757.5 297,735.0 301,745.0 305,755.0 309,767.5 313,771.2 317,780.0 321,816.9 325,845.6 329,863.1 333,825.0 337,790.6 341,737.5 345,730.6 349,723.1 353,721.2 357,740.0 361,765.0 365,773.1 369,752.5 373,738.8 377,748.8 381,749.4 385,742.5 389,737.5 393,742.5 397,746.2 401,741.9 405,734.4 409,740.0 413,775.0 417,792.5 421,800.6 425,749.4 429,752.5 433,746.2 437,751.9 441,757.5 445,788.8 449,835.0 453,866.2 457,842.5 461,827.5 465,806.2 469,802.5 473,793.8 477,771.9 481,751.2 485,738.1 489,748.8 493,726.9 497,741.2 501,761.2 505,795.0 509,783.8 513,756.2 517,749.4 521,743.8 525,741.2 529,733.8 533,725.6 537,736.9 541,756.2 545,777.5 549,787.5 553,771.2 557,802.5 561,831.9 565,854.4 569,872.5 573,850.0 577,815.0 581,777.5 585,769.2 589,760.8 593,752.5 597,769.2 601,785.8 605,802.5 609,827.5 613,830.6 617,815.0 621,783.8 625,775.9 629,768.1 633,760.3 637,752.5 641,755.6 645,758.8 649,761.9 653,765.0 657,777.5 661,790.0 665,818.8 669,851.2 673,840.0 677,831.9 681,815.0 685,790.0 689,780.6 693,771.2 697,761.9 701,752.5 705,758.8 709,765.0 713,771.2 717,777.5 721,796.2 725,815.0 729,829.4 733,825.0 737,822.8 741,821.9 745,827.5 749,839.4 753,828.8 757,818.8 761,796.2 765,785.3 769,774.4 773,763.4 777,752.5 781,763.4 785,774.4 789,785.3 793,796.2 797,815.0 801,822.8 805,823.5 809,840.0 813,861.9 817,879.4 821,872.5 825,865.0 829,835.0 833,826.9 837,823.5 841,808.8 845,794.7 849,780.6 853,766.6 857,752.5 861,761.9 865,771.2 869,780.6 873,790.0 877,808.8 881,821.2 885,831.2 889,837.2 893,839.4 897,836.2 901,825.0 905,802.5 909,790.0 913,777.5 917,765.0 921,752.5 925,769.2 929,785.8 933,802.5 937,826.2 941,841.2 945,838.1 949,836.2 953,846.9 957,830.0 961,802.5 965,790.0 969,777.5 973,765.0 977,752.5 981,761.9 985,771.2 989,780.6 993,790.0 997,808.8 1001,823.8 1005,845.0 1009,831.2 1013,802.5 1017,790.0 1021,777.5 1025,765.0 1029,752.5 1033,767.1 1037,781.7 1041,796.2 1045,822.5 1049,851.2 1053,873.1 1057,874.0 1061,856.2 1065,827.5 1069,796.2 1073,780.6 1077,765.0 1081,774.4 1085,783.8 1089,808.8 1093,843.8 1097,875.0 1101,879.4 1105,876.9 1109,867.5 1113,846.2 1117,815.0 1121,783.8 1125,775.9 1129,768.1 1133,760.3 1137,752.5 1141,765.0 1145,777.5 1149,790.0 1153,815.0 1157,842.5 1161,855.6 1165,846.2 1169,852.5 1173,827.5 1177,796.2 1181,785.3 1185,774.4 1189,763.4 1193,752.5 1197,752.5 1201,752.5 1205,752.5 1209,750.0 1213,747.5 1217,745.0 1221,742.5 1225,740.0 1229,745.0 1233,750.0 1237,755.0 1241,760.0 1245,765.0 1249,772.5 1253,780.0 1257,788.8 1261,744.4 1265,755.6 1269,763.8 1273,770.0 1277,760.0 1281,726.2 1285,719.0 1289,715.6 1293,730.0 1297,746.2 1301,762.5 1305,780.0 1309,806.2 1313,826.2 1317,795.9 1321,760.0 1325,743.8 1329,760.0 1333,781.9 1337,814.4 1341,829.4 1345,834.4 1349,831.9 1353,822.5 1357,806.2 1361,770.0 1365,718.8 1369,703.1 1373,731.2 1377,747.5 1381,756.9 1385,760.0 1389,761.9 1393,755.0 1397,731.2 1401,713.8 1405,729.4 1409,783.8 1413,836.2 1417,882.5 1421,878.1 1425,877.9 1429,880.2 1433,876.2 1437,843.8 1441,808.8 1445,773.8 1449,788.8 1453,811.2 1457,840.0 1461,865.0 1465,873.1 1469,840.0 1473,801.2 1477,741.2 1481,731.9 1485,731.9 1489,738.1 1493,748.1 1497,777.5 1501,819.4 1505,805.0 1509,781.2 1513,754.4 1517,786.2 1521,833.8 1525,870.0 1529,862.5 1533,853.8 1537,841.2 1541,827.5 1545,802.5 1549,761.2 1553,751.2 1557,772.5 1561,806.2 1565,797.5 1569,803.8 1573,817.5 1577,855.0 1581,865.6 1585,864.8 1589,865.6 1593,866.9 1597,868.1 1601,873.5 1605,869.4 1609,863.8 1613,857.5 1617,846.9 1621,851.9 1625,848.8 1629,856.2 1633,868.8 1637,870.0 1641,868.8 1645,843.1 1649,809.4 1653,793.8 1657,770.6 1661,750.0 1665,730.6 1669,725.2 1673,719.4 1677,709.4 1681,702.1 1685,705.4 1689,708.1 1693,718.8 1697,783.8 1701,841.2 1705,815.0 1709,782.5 1713,763.1 1717,769.4 1721,778.8 1725,792.5 1729,808.1 1733,792.5 1737,755.0 1741,710.0 1745,693.8 1749,732.5 1753,771.2 1757,815.0 1761,848.8 1765,848.1 1769,854.4 1773,849.4 1777,850.6 1781,830.0 1785,821.2 1789,775.0 1793,755.0 1797,735.6 1801,771.2 1805,811.2 1809,846.2 1813,871.9 1817,884.4 1821,884.1 1825,880.0 1829,868.5 1833,866.9 1837,852.5 1841,825.6 1845,800.6 1849,790.0 1853,796.9 1857,791.5 1861,809.4 1865,835.6 1869,860.0"/>
</g>
<path d="M5 899 L5 904 L10 904 Z" fill="#808080"/>
<g id="stoch-arrows">
<path d="M143.30 679.65 L145.50 679.65 L145.50 685.60 L147.90 682.90 L148.80 683.60 L148.80 685.40 L144.40 689.50 L140.00 685.40 L140.00 683.60 L140.90 682.90 L143.30 685.60 Z" fill="#00ee00"/>
<path d="M55.40 728.15 L57.60 728.15 L57.60 734.10 L60.00 731.40 L60.90 732.10 L60.90 733.90 L56.50 738.00 L52.10 733.90 L52.10 732.10 L53.00 731.40 L55.40 734.10 Z" fill="#00ee00"/>
<path d="M227.65 696.30 L229.85 696.30 L229.85 702.25 L232.25 699.55 L233.15 700.25 L233.15 702.05 L228.75 706.15 L224.35 702.05 L224.35 700.25 L225.25 699.55 L227.65 702.25 Z" fill="#00ee00"/>
<path d="M11.40 843.80 L13.60 843.80 L13.60 849.75 L16.00 847.05 L16.90 847.75 L16.90 849.55 L12.50 853.65 L8.10 849.55 L8.10 847.75 L9.00 847.05 L11.40 849.75 Z" fill="#00ee00"/>
<path d="M19.50 838.80 L21.70 838.80 L21.70 844.75 L24.10 842.05 L25.00 842.75 L25.00 844.55 L20.60 848.65 L16.20 844.55 L16.20 842.75 L17.10 842.05 L19.50 844.75 Z" fill="#00ee00"/>
<path d="M75.40 825.65 L77.60 825.65 L77.60 831.60 L80.00 828.90 L80.90 829.60 L80.90 831.40 L76.50 835.50 L72.10 831.40 L72.10 829.60 L73.00 828.90 L75.40 831.60 Z" fill="#00ee00"/>
<path d="M199.50 862.55 L201.70 862.55 L201.70 868.50 L204.10 865.80 L205.00 866.50 L205.00 868.30 L200.60 872.40 L196.20 868.30 L196.20 866.50 L197.10 865.80 L199.50 868.50 Z" fill="#00ee00"/>
<path d="M251.80 700.05 L254.00 700.05 L254.00 706.00 L256.40 703.30 L257.30 704.00 L257.30 705.80 L252.90 709.90 L248.50 705.80 L248.50 704.00 L249.40 703.30 L251.80 706.00 Z" fill="#00ee00"/>
<path d="M299.80 726.95 L302.00 726.95 L302.00 732.90 L304.40 730.20 L305.30 730.90 L305.30 732.70 L300.90 736.80 L296.50 732.70 L296.50 730.90 L297.40 730.20 L299.80 732.90 Z" fill="#00ee00"/>
<path d="M355.80 713.80 L358.00 713.80 L358.00 719.75 L360.40 717.05 L361.30 717.75 L361.30 719.55 L356.90 723.65 L352.50 719.55 L352.50 717.75 L353.40 717.05 L355.80 719.75 Z" fill="#00ee00"/>
<path d="M375.50 730.05 L377.70 730.05 L377.70 736.00 L380.10 733.30 L381.00 734.00 L381.00 735.80 L376.60 739.90 L372.20 735.80 L372.20 734.00 L373.10 733.30 L375.50 736.00 Z" fill="#00ee00"/>
<path d="M391.65 725.05 L393.85 725.05 L393.85 731.00 L396.25 728.30 L397.15 729.00 L397.15 730.80 L392.75 734.90 L388.35 730.80 L388.35 729.00 L389.25 728.30 L391.65 731.00 Z" fill="#00ee00"/>
<path d="M407.65 720.65 L409.85 720.65 L409.85 726.60 L412.25 723.90 L413.15 724.60 L413.15 726.40 L408.75 730.50 L404.35 726.40 L404.35 724.60 L405.25 723.90 L407.65 726.60 Z" fill="#00ee00"/>
<path d="M435.50 735.95 L437.70 735.95 L437.70 741.90 L440.10 739.20 L441.00 739.90 L441.00 741.70 L436.60 745.80 L432.20 741.70 L432.20 739.90 L433.10 739.20 L435.50 741.90 Z" fill="#00ee00"/>
<path d="M283.30 829.45 L285.50 829.45 L285.50 835.40 L287.90 832.70 L288.80 833.40 L288.80 835.20 L284.40 839.30 L280.00 835.20 L280.00 833.40 L280.90 832.70 L283.30 835.40 Z" fill="#00ee00"/>
<path d="M467.40 799.80 L469.60 799.80 L469.60 805.75 L472.00 803.05 L472.90 803.75 L472.90 805.55 L468.50 809.65 L464.10 805.55 L464.10 803.75 L465.00 803.05 L467.40 805.75 Z" fill="#00ee00"/>
<path d="M487.90 731.95 L490.10 731.95 L490.10 737.90 L492.50 735.20 L493.40 735.90 L493.40 737.70 L489.00 741.80 L484.60 737.70 L484.60 735.90 L485.50 735.20 L487.90 737.90 Z" fill="#00ee00"/>
<path d="M495.80 723.80 L498.00 723.80 L498.00 729.75 L500.40 727.05 L501.30 727.75 L501.30 729.55 L496.90 733.65 L492.50 729.55 L492.50 727.75 L493.40 727.05 L495.80 729.75 Z" fill="#00ee00"/>
<path d="M535.40 715.65 L537.60 715.65 L537.60 721.60 L540.00 718.90 L540.90 719.60 L540.90 721.40 L536.50 725.50 L532.10 721.40 L532.10 719.60 L533.00 718.90 L535.40 721.60 Z" fill="#00ee00"/>
<path d="M552.40 787.05 L554.60 787.05 L554.60 793.00 L557.00 790.30 L557.90 791.00 L557.90 792.80 L553.50 796.90 L549.10 792.80 L549.10 791.00 L550.00 790.30 L552.40 793.00 Z" fill="#00ee00"/>
<path d="M951.15 826.95 L953.35 826.95 L953.35 832.90 L955.75 830.20 L956.65 830.90 L956.65 832.70 L952.25 836.80 L947.85 832.70 L947.85 830.90 L948.75 830.20 L951.15 832.90 Z" fill="#00ee00"/>
<path d="M1166.90 836.30 L1169.10 836.30 L1169.10 842.25 L1171.50 839.55 L1172.40 840.25 L1172.40 842.05 L1168.00 846.15 L1163.60 842.05 L1163.60 840.25 L1164.50 839.55 L1166.90 842.25 Z" fill="#00ee00"/>
<path d="M1427.40 863.15 L1429.60 863.15 L1429.60 869.10 L1432.00 866.40 L1432.90 867.10 L1432.90 868.90 L1428.50 873.00 L1424.10 868.90 L1424.10 867.10 L1425.00 866.40 L1427.40 869.10 Z" fill="#00ee00"/>
<path d="M1267.90 741.95 L1270.10 741.95 L1270.10 747.90 L1272.50 745.20 L1273.40 745.90 L1273.40 747.70 L1269.00 751.80 L1264.60 747.70 L1264.60 745.90 L1265.50 745.20 L1267.90 747.90 Z" fill="#00ee00"/>
<path d="M1291.65 708.80 L1293.85 708.80 L1293.85 714.75 L1296.25 712.05 L1297.15 712.75 L1297.15 714.55 L1292.75 718.65 L1288.35 714.55 L1288.35 712.75 L1289.25 712.05 L1291.65 714.75 Z" fill="#00ee00"/>
<path d="M1327.65 736.55 L1329.85 736.55 L1329.85 742.50 L1332.25 739.80 L1333.15 740.50 L1333.15 742.30 L1328.75 746.40 L1324.35 742.30 L1324.35 740.50 L1325.25 739.80 L1327.65 742.50 Z" fill="#00ee00"/>
<path d="M1371.40 702.80 L1373.60 702.80 L1373.60 708.75 L1376.00 706.05 L1376.90 706.75 L1376.90 708.55 L1372.50 712.65 L1368.10 708.55 L1368.10 706.75 L1369.00 706.05 L1371.40 708.75 Z" fill="#00ee00"/>
<path d="M1387.40 744.80 L1389.60 744.80 L1389.60 750.75 L1392.00 748.05 L1392.90 748.75 L1392.90 750.55 L1388.50 754.65 L1384.10 750.55 L1384.10 748.75 L1385.00 748.05 L1387.40 750.75 Z" fill="#00ee00"/>
<path d="M1403.50 704.80 L1405.70 704.80 L1405.70 710.75 L1408.10 708.05 L1409.00 708.75 L1409.00 710.55 L1404.60 714.65 L1400.20 710.55 L1400.20 708.75 L1401.10 708.05 L1403.50 710.75 Z" fill="#00ee00"/>
<path d="M1447.40 770.65 L1449.60 770.65 L1449.60 776.60 L1452.00 773.90 L1452.90 774.60 L1452.90 776.40 L1448.50 780.50 L1444.10 776.40 L1444.10 774.60 L1445.00 773.90 L1447.40 776.60 Z" fill="#00ee00"/>
<path d="M1487.65 720.05 L1489.85 720.05 L1489.85 726.00 L1492.25 723.30 L1493.15 724.00 L1493.15 725.80 L1488.75 729.90 L1484.35 725.80 L1484.35 724.00 L1485.25 723.30 L1487.65 726.00 Z" fill="#00ee00"/>
<path d="M1515.50 764.05 L1517.70 764.05 L1517.70 770.00 L1520.10 767.30 L1521.00 768.00 L1521.00 769.80 L1516.60 773.90 L1512.20 769.80 L1512.20 768.00 L1513.10 767.30 L1515.50 770.00 Z" fill="#00ee00"/>
<path d="M1555.80 753.15 L1558.00 753.15 L1558.00 759.10 L1560.40 756.40 L1561.30 757.10 L1561.30 758.90 L1556.90 763.00 L1552.50 758.90 L1552.50 757.10 L1553.40 756.40 L1555.80 759.10 Z" fill="#00ee00"/>
<path d="M1567.50 785.55 L1569.70 785.55 L1569.70 791.50 L1572.10 788.80 L1573.00 789.50 L1573.00 791.30 L1568.60 795.40 L1564.20 791.30 L1564.20 789.50 L1565.10 788.80 L1567.50 791.50 Z" fill="#00ee00"/>
<path d="M1619.15 835.05 L1621.35 835.05 L1621.35 841.00 L1623.75 838.30 L1624.65 839.00 L1624.65 840.80 L1620.25 844.90 L1615.85 840.80 L1615.85 839.00 L1616.75 838.30 L1619.15 841.00 Z" fill="#00ee00"/>
<path d="M1627.40 837.55 L1629.60 837.55 L1629.60 843.50 L1632.00 840.80 L1632.90 841.50 L1632.90 843.30 L1628.50 847.40 L1624.10 843.30 L1624.10 841.50 L1625.00 840.80 L1627.40 843.50 Z" fill="#00ee00"/>
<path d="M1683.65 688.80 L1685.85 688.80 L1685.85 694.75 L1688.25 692.05 L1689.15 692.75 L1689.15 694.55 L1684.75 698.65 L1680.35 694.55 L1680.35 692.75 L1681.25 692.05 L1683.65 694.75 Z" fill="#00ee00"/>
<path d="M1719.50 756.05 L1721.70 756.05 L1721.70 762.00 L1724.10 759.30 L1725.00 760.00 L1725.00 761.80 L1720.60 765.90 L1716.20 761.80 L1716.20 760.00 L1717.10 759.30 L1719.50 762.00 Z" fill="#00ee00"/>
<path d="M1747.65 697.95 L1749.85 697.95 L1749.85 703.90 L1752.25 701.20 L1753.15 701.90 L1753.15 703.70 L1748.75 707.80 L1744.35 703.70 L1744.35 701.90 L1745.25 701.20 L1747.65 703.90 Z" fill="#00ee00"/>
<path d="M1799.50 743.15 L1801.70 743.15 L1801.70 749.10 L1804.10 746.40 L1805.00 747.10 L1805.00 748.90 L1800.60 753.00 L1796.20 748.90 L1796.20 747.10 L1797.10 746.40 L1799.50 749.10 Z" fill="#00ee00"/>
<path d="M1851.40 781.95 L1853.60 781.95 L1853.60 787.90 L1856.00 785.20 L1856.90 785.90 L1856.90 787.70 L1852.50 791.80 L1848.10 787.70 L1848.10 785.90 L1849.00 785.20 L1851.40 787.90 Z" fill="#00ee00"/>
<path d="M1859.50 783.80 L1861.70 783.80 L1861.70 789.75 L1864.10 787.05 L1865.00 787.75 L1865.00 789.55 L1860.60 793.65 L1856.20 789.55 L1856.20 787.75 L1857.10 787.05 L1859.50 789.75 Z" fill="#00ee00"/>
<path d="M4.50 888.70 L6.70 888.70 L6.70 882.75 L9.10 885.45 L10.00 884.75 L10.00 882.95 L5.60 878.85 L1.20 882.95 L1.20 884.75 L2.10 885.45 L4.50 882.75 Z" fill="#ffff00"/>
<path d="M15.80 868.70 L18.00 868.70 L18.00 862.75 L20.40 865.45 L21.30 864.75 L21.30 862.95 L16.90 858.85 L12.50 862.95 L12.50 864.75 L13.40 865.45 L15.80 862.75 Z" fill="#ffff00"/>
<path d="M24.50 850.55 L26.70 850.55 L26.70 844.60 L29.10 847.30 L30.00 846.60 L30.00 844.80 L25.60 840.70 L21.20 844.80 L21.20 846.60 L22.10 847.30 L24.50 844.60 Z" fill="#ffff00"/>
<path d="M67.40 859.95 L69.60 859.95 L69.60 854.00 L72.00 856.70 L72.90 856.00 L72.90 854.20 L68.50 850.10 L64.10 854.20 L64.10 856.00 L65.00 856.70 L67.40 854.00 Z" fill="#ffff00"/>
<path d="M99.50 880.55 L101.70 880.55 L101.70 874.60 L104.10 877.30 L105.00 876.60 L105.00 874.80 L100.60 870.70 L96.20 874.80 L96.20 876.60 L97.10 877.30 L99.50 874.60 Z" fill="#ffff00"/>
<path d="M187.65 891.85 L189.85 891.85 L189.85 885.90 L192.25 888.60 L193.15 887.90 L193.15 886.10 L188.75 882.00 L184.35 886.10 L184.35 887.90 L185.25 888.60 L187.65 885.90 Z" fill="#ffff00"/>
<path d="M207.65 892.45 L209.85 892.45 L209.85 886.50 L212.25 889.20 L213.15 888.50 L213.15 886.70 L208.75 882.60 L204.35 886.70 L204.35 888.50 L205.25 889.20 L207.65 886.50 Z" fill="#ffff00"/>
<path d="M235.15 736.20 L237.35 736.20 L237.35 730.25 L239.75 732.95 L240.65 732.25 L240.65 730.45 L236.25 726.35 L231.85 730.45 L231.85 732.25 L232.75 732.95 L235.15 730.25 Z" fill="#ffff00"/>
<path d="M271.65 873.70 L273.85 873.70 L273.85 867.75 L276.25 870.45 L277.15 869.75 L277.15 867.95 L272.75 863.85 L268.35 867.95 L268.35 869.75 L269.25 870.45 L271.65 867.75 Z" fill="#ffff00"/>
<path d="M288.65 836.85 L290.85 836.85 L290.85 830.90 L293.25 833.60 L294.15 832.90 L294.15 831.10 L289.75 827.00 L285.35 831.10 L285.35 832.90 L286.25 833.60 L288.65 830.90 Z" fill="#ffff00"/>
<path d="M331.65 856.45 L333.85 856.45 L333.85 850.50 L336.25 853.20 L337.15 852.50 L337.15 850.70 L332.75 846.60 L328.35 850.70 L328.35 852.50 L329.25 853.20 L331.65 850.50 Z" fill="#ffff00"/>
<path d="M455.15 865.55 L457.35 865.55 L457.35 859.60 L459.75 862.30 L460.65 861.60 L460.65 859.80 L456.25 855.70 L451.85 859.80 L451.85 861.60 L452.75 862.30 L455.15 859.60 Z" fill="#ffff00"/>
<path d="M471.65 817.45 L473.85 817.45 L473.85 811.50 L476.25 814.20 L477.15 813.50 L477.15 811.70 L472.75 807.60 L468.35 811.70 L468.35 813.50 L469.25 814.20 L471.65 811.50 Z" fill="#ffff00"/>
<path d="M367.65 778.05 L369.85 778.05 L369.85 772.10 L372.25 774.80 L373.15 774.10 L373.15 772.30 L368.75 768.20 L364.35 772.30 L364.35 774.10 L365.25 774.80 L367.65 772.10 Z" fill="#ffff00"/>
<path d="M383.90 760.55 L386.10 760.55 L386.10 754.60 L388.50 757.30 L389.40 756.60 L389.40 754.80 L385.00 750.70 L380.60 754.80 L380.60 756.60 L381.50 757.30 L383.90 754.60 Z" fill="#ffff00"/>
<path d="M399.80 758.05 L402.00 758.05 L402.00 752.10 L404.40 754.80 L405.30 754.10 L405.30 752.30 L400.90 748.20 L396.50 752.30 L396.50 754.10 L397.40 754.80 L399.80 752.10 Z" fill="#ffff00"/>
<path d="M423.90 788.70 L426.10 788.70 L426.10 782.75 L428.50 785.45 L429.40 784.75 L429.40 782.95 L425.00 778.85 L420.60 782.95 L420.60 784.75 L421.50 785.45 L423.90 782.75 Z" fill="#ffff00"/>
<path d="M491.40 751.85 L493.60 751.85 L493.60 745.90 L496.00 748.60 L496.90 747.90 L496.90 746.10 L492.50 742.00 L488.10 746.10 L488.10 747.90 L489.00 748.60 L491.40 745.90 Z" fill="#ffff00"/>
<path d="M511.40 788.70 L513.60 788.70 L513.60 782.75 L516.00 785.45 L516.90 784.75 L516.90 782.95 L512.50 778.85 L508.10 782.95 L508.10 784.75 L509.00 785.45 L511.40 782.75 Z" fill="#ffff00"/>
<path d="M571.65 879.95 L573.85 879.95 L573.85 874.00 L576.25 876.70 L577.15 876.00 L577.15 874.20 L572.75 870.10 L568.35 874.20 L568.35 876.00 L569.25 876.70 L571.65 874.00 Z" fill="#ffff00"/>
<path d="M615.50 838.70 L617.70 838.70 L617.70 832.75 L620.10 835.45 L621.00 834.75 L621.00 832.95 L616.60 828.85 L612.20 832.95 L612.20 834.75 L613.10 835.45 L615.50 832.75 Z" fill="#ffff00"/>
<path d="M675.50 852.70 L677.70 852.70 L677.70 846.75 L680.10 849.45 L681.00 848.75 L681.00 846.95 L676.60 842.85 L672.20 846.95 L672.20 848.75 L673.10 849.45 L675.50 846.75 Z" fill="#ffff00"/>
<path d="M735.80 839.95 L738.00 839.95 L738.00 834.00 L740.40 836.70 L741.30 836.00 L741.30 834.20 L736.90 830.10 L732.50 834.20 L732.50 836.00 L733.40 836.70 L735.80 834.00 Z" fill="#ffff00"/>
<path d="M751.65 845.95 L753.85 845.95 L753.85 840.00 L756.25 842.70 L757.15 842.00 L757.15 840.20 L752.75 836.10 L748.35 840.20 L748.35 842.00 L749.25 842.70 L751.65 840.00 Z" fill="#ffff00"/>
<path d="M819.90 888.95 L822.10 888.95 L822.10 883.00 L824.50 885.70 L825.40 885.00 L825.40 883.20 L821.00 879.10 L816.60 883.20 L816.60 885.00 L817.50 885.70 L819.90 883.00 Z" fill="#ffff00"/>
<path d="M895.50 851.85 L897.70 851.85 L897.70 845.90 L900.10 848.60 L901.00 847.90 L901.00 846.10 L896.60 842.00 L892.20 846.10 L892.20 847.90 L893.10 848.60 L895.50 845.90 Z" fill="#ffff00"/>
<path d="M947.40 851.85 L949.60 851.85 L949.60 845.90 L952.00 848.60 L952.90 847.90 L952.90 846.10 L948.50 842.00 L944.10 846.10 L944.10 847.90 L945.00 848.60 L947.40 845.90 Z" fill="#ffff00"/>
<path d="M955.15 853.70 L957.35 853.70 L957.35 847.75 L959.75 850.45 L960.65 849.75 L960.65 847.95 L956.25 843.85 L951.85 847.95 L951.85 849.75 L952.75 850.45 L955.15 847.75 Z" fill="#ffff00"/>
<path d="M1007.65 856.85 L1009.85 856.85 L1009.85 850.90 L1012.25 853.60 L1013.15 852.90 L1013.15 851.10 L1008.75 847.00 L1004.35 851.10 L1004.35 852.90 L1005.25 853.60 L1007.65 850.90 Z" fill="#ffff00"/>
<path d="M1059.90 877.70 L1062.10 877.70 L1062.10 871.75 L1064.50 874.45 L1065.40 873.75 L1065.40 871.95 L1061.00 867.85 L1056.60 871.95 L1056.60 873.75 L1057.50 874.45 L1059.90 871.75 Z" fill="#ffff00"/>
<path d="M1103.65 893.95 L1105.85 893.95 L1105.85 888.00 L1108.25 890.70 L1109.15 890.00 L1109.15 888.20 L1104.75 884.10 L1100.35 888.20 L1100.35 890.00 L1101.25 890.70 L1103.65 888.00 Z" fill="#ffff00"/>
<path d="M1163.50 864.95 L1165.70 864.95 L1165.70 859.00 L1168.10 861.70 L1169.00 861.00 L1169.00 859.20 L1164.60 855.10 L1160.20 859.20 L1160.20 861.00 L1161.10 861.70 L1163.50 859.00 Z" fill="#ffff00"/>
<path d="M1172.65 849.95 L1174.85 849.95 L1174.85 844.00 L1177.25 846.70 L1178.15 846.00 L1178.15 844.20 L1173.75 840.10 L1169.35 844.20 L1169.35 846.00 L1170.25 846.70 L1172.65 844.00 Z" fill="#ffff00"/>
<path d="M1315.80 818.95 L1318.00 818.95 L1318.00 813.00 L1320.40 815.70 L1321.30 815.00 L1321.30 813.20 L1316.90 809.10 L1312.50 813.20 L1312.50 815.00 L1313.40 815.70 L1315.80 813.00 Z" fill="#ffff00"/>
<path d="M1347.65 848.05 L1349.85 848.05 L1349.85 842.10 L1352.25 844.80 L1353.15 844.10 L1353.15 842.30 L1348.75 838.20 L1344.35 842.30 L1344.35 844.10 L1345.25 844.80 L1347.65 842.10 Z" fill="#ffff00"/>
<path d="M1423.90 893.70 L1426.10 893.70 L1426.10 887.75 L1428.50 890.45 L1429.40 889.75 L1429.40 887.95 L1425.00 883.85 L1420.60 887.95 L1420.60 889.75 L1421.50 890.45 L1423.90 887.75 Z" fill="#ffff00"/>
<path d="M1432.00 893.05 L1434.20 893.05 L1434.20 887.10 L1436.60 889.80 L1437.50 889.10 L1437.50 887.30 L1433.10 883.20 L1428.70 887.30 L1428.70 889.10 L1429.60 889.80 L1432.00 887.10 Z" fill="#ffff00"/>
<path d="M1259.80 780.95 L1262.00 780.95 L1262.00 775.00 L1264.40 777.70 L1265.30 777.00 L1265.30 775.20 L1260.90 771.10 L1256.50 775.20 L1256.50 777.00 L1257.40 777.70 L1259.80 775.00 Z" fill="#ffff00"/>
<path d="M1276.00 781.85 L1278.20 781.85 L1278.20 775.90 L1280.60 778.60 L1281.50 777.90 L1281.50 776.10 L1277.10 772.00 L1272.70 776.10 L1272.70 777.90 L1273.60 778.60 L1276.00 775.90 Z" fill="#ffff00"/>
<path d="M1383.65 773.95 L1385.85 773.95 L1385.85 768.00 L1388.25 770.70 L1389.15 770.00 L1389.15 768.20 L1384.75 764.10 L1380.35 768.20 L1380.35 770.00 L1381.25 770.70 L1383.65 768.00 Z" fill="#ffff00"/>
<path d="M1392.00 773.95 L1394.20 773.95 L1394.20 768.00 L1396.60 770.70 L1397.50 770.00 L1397.50 768.20 L1393.10 764.10 L1388.70 768.20 L1388.70 770.00 L1389.60 770.70 L1392.00 768.00 Z" fill="#ffff00"/>
<path d="M1467.90 873.05 L1470.10 873.05 L1470.10 867.10 L1472.50 869.80 L1473.40 869.10 L1473.40 867.30 L1469.00 863.20 L1464.60 867.30 L1464.60 869.10 L1465.50 869.80 L1467.90 867.10 Z" fill="#ffff00"/>
<path d="M1507.65 816.20 L1509.85 816.20 L1509.85 810.25 L1512.25 812.95 L1513.15 812.25 L1513.15 810.45 L1508.75 806.35 L1504.35 810.45 L1504.35 812.25 L1505.25 812.95 L1507.65 810.25 Z" fill="#ffff00"/>
<path d="M1527.65 878.05 L1529.85 878.05 L1529.85 872.10 L1532.25 874.80 L1533.15 874.10 L1533.15 872.30 L1528.75 868.20 L1524.35 872.30 L1524.35 874.10 L1525.25 874.80 L1527.65 872.10 Z" fill="#ffff00"/>
<path d="M1563.65 813.70 L1565.85 813.70 L1565.85 807.75 L1568.25 810.45 L1569.15 809.75 L1569.15 807.95 L1564.75 803.85 L1560.35 807.95 L1560.35 809.75 L1561.25 810.45 L1563.65 807.75 Z" fill="#ffff00"/>
<path d="M1603.50 885.95 L1605.70 885.95 L1605.70 880.00 L1608.10 882.70 L1609.00 882.00 L1609.00 880.20 L1604.60 876.10 L1600.20 880.20 L1600.20 882.00 L1601.10 882.70 L1603.50 880.00 Z" fill="#ffff00"/>
<path d="M1623.50 864.95 L1625.70 864.95 L1625.70 859.00 L1628.10 861.70 L1629.00 861.00 L1629.00 859.20 L1624.60 855.10 L1620.20 859.20 L1620.20 861.00 L1621.10 861.70 L1623.50 859.00 Z" fill="#ffff00"/>
<path d="M1643.65 873.70 L1645.85 873.70 L1645.85 867.75 L1648.25 870.45 L1649.15 869.75 L1649.15 867.95 L1644.75 863.85 L1640.35 867.95 L1640.35 869.75 L1641.25 870.45 L1643.65 867.75 Z" fill="#ffff00"/>
<path d="M1703.50 838.05 L1705.70 838.05 L1705.70 832.10 L1708.10 834.80 L1709.00 834.10 L1709.00 832.30 L1704.60 828.20 L1700.20 832.30 L1700.20 834.10 L1701.10 834.80 L1703.50 832.10 Z" fill="#ffff00"/>
<path d="M1731.80 814.95 L1734.00 814.95 L1734.00 809.00 L1736.40 811.70 L1737.30 811.00 L1737.30 809.20 L1732.90 805.10 L1728.50 809.20 L1728.50 811.00 L1729.40 811.70 L1731.80 809.00 Z" fill="#ffff00"/>
<path d="M1771.65 865.95 L1773.85 865.95 L1773.85 860.00 L1776.25 862.70 L1777.15 862.00 L1777.15 860.20 L1772.75 856.10 L1768.35 860.20 L1768.35 862.00 L1769.25 862.70 L1771.65 860.00 Z" fill="#ffff00"/>
<path d="M1823.65 896.85 L1825.85 896.85 L1825.85 890.90 L1828.25 893.60 L1829.15 892.90 L1829.15 891.10 L1824.75 887.00 L1820.35 891.10 L1820.35 892.90 L1821.25 893.60 L1823.65 890.90 Z" fill="#ffff00"/>
<path d="M1855.80 807.70 L1858.00 807.70 L1858.00 801.75 L1860.40 804.45 L1861.30 803.75 L1861.30 801.95 L1856.90 797.85 L1852.50 801.95 L1852.50 803.75 L1853.40 804.45 L1855.80 801.75 Z" fill="#ffff00"/>
</g></g>
<linearGradient id="gY" x1="0" y1="0" x2="1" y2="1"><stop offset="0" stop-color="#fdf6a8"/><stop offset="1" stop-color="#e6cc5a"/></linearGradient>
<linearGradient id="gG" x1="0" y1="0" x2="1" y2="1"><stop offset="0" stop-color="#bcf8bc"/><stop offset="1" stop-color="#62dc78"/></linearGradient>
<linearGradient id="gB" x1="0" y1="0" x2="1" y2="1"><stop offset="0" stop-color="#bcdcfa"/><stop offset="1" stop-color="#7fb2ea"/></linearGradient>
<g id="dialog">
<g shape-rendering="crispEdges">
<rect x="550" y="89" width="703" height="734" fill="#3d7fbd"/>
<rect x="551" y="90" width="701" height="732" fill="#f0f0f0"/>
<rect x="551" y="90" width="701" height="30" fill="#ffffff"/>
<rect x="558" y="150" width="689" height="638" fill="#dcdcdc"/>
<rect x="559" y="151" width="687" height="636" fill="#ffffff"/>
<rect x="560" y="130" width="80" height="20" fill="#d9d9d9"/>
<rect x="561" y="131" width="78" height="19" fill="#f0f0f0"/>
<rect x="639" y="130" width="48" height="20" fill="#d9d9d9"/>
<rect x="640" y="131" width="46" height="19" fill="#f0f0f0"/>
<rect x="786" y="130" width="57" height="20" fill="#d9d9d9"/>
<rect x="787" y="131" width="55" height="19" fill="#f0f0f0"/>
<rect x="842" y="130" width="59" height="20" fill="#d9d9d9"/>
<rect x="843" y="131" width="57" height="19" fill="#f0f0f0"/>
<rect x="686" y="128" width="101" height="23" fill="#d9d9d9"/>
<rect x="687" y="129" width="99" height="23" fill="#ffffff"/>
<rect x="570" y="160" width="536" height="619" fill="#828790"/>
<rect x="571" y="161" width="534" height="617" fill="#ffffff"/>
<rect x="837" y="162" width="1" height="24" fill="#e5e5e5"/>
<rect x="1103" y="162" width="1" height="24" fill="#e5e5e5"/>
<rect x="572" y="205" width="532" height="1" fill="#d4d4d4"/>
<rect x="837" y="186" width="1" height="20" fill="#d4d4d4"/>
<rect x="572" y="206" width="532" height="19" fill="#ebebeb"/>
<rect x="572" y="225" width="532" height="1" fill="#d4d4d4"/>
<rect x="837" y="206" width="1" height="20" fill="#d4d4d4"/>
<rect x="572" y="245" width="532" height="1" fill="#d4d4d4"/>
<rect x="837" y="226" width="1" height="20" fill="#d4d4d4"/>
<rect x="572" y="246" width="532" height="19" fill="#ebebeb"/>
<rect x="572" y="265" width="532" height="1" fill="#d4d4d4"/>
<rect x="837" y="246" width="1" height="20" fill="#d4d4d4"/>
<rect x="572" y="285" width="532" height="1" fill="#d4d4d4"/>
<rect x="837" y="266" width="1" height="20" fill="#d4d4d4"/>
<rect x="572" y="286" width="532" height="19" fill="#ebebeb"/>
<rect x="572" y="305" width="532" height="1" fill="#d4d4d4"/>
<rect x="837" y="286" width="1" height="20" fill="#d4d4d4"/>
<rect x="572" y="325" width="532" height="1" fill="#d4d4d4"/>
<rect x="837" y="306" width="1" height="20" fill="#d4d4d4"/>
<rect x="572" y="326" width="532" height="19" fill="#ebebeb"/>
<rect x="572" y="345" width="532" height="1" fill="#d4d4d4"/>
<rect x="837" y="326" width="1" height="20" fill="#d4d4d4"/>
<rect x="572" y="365" width="532" height="1" fill="#d4d4d4"/>
<rect x="837" y="346" width="1" height="20" fill="#d4d4d4"/>
<rect x="572" y="366" width="532" height="19" fill="#ebebeb"/>
<rect x="572" y="385" width="532" height="1" fill="#d4d4d4"/>
<rect x="837" y="366" width="1" height="20" fill="#d4d4d4"/>
<rect x="572" y="405" width="532" height="1" fill="#d4d4d4"/>
<rect x="837" y="386" width="1" height="20" fill="#d4d4d4"/>
<rect x="572" y="406" width="532" height="19" fill="#ebebeb"/>
<rect x="572" y="425" width="532" height="1" fill="#d4d4d4"/>
<rect x="837" y="406" width="1" height="20" fill="#d4d4d4"/>
<rect x="572" y="445" width="532" height="1" fill="#d4d4d4"/>
<rect x="837" y="426" width="1" height="20" fill="#d4d4d4"/>
<rect x="572" y="446" width="532" height="19" fill="#ebebeb"/>
<rect x="572" y="465" width="532" height="1" fill="#d4d4d4"/>
<rect x="837" y="446" width="1" height="20" fill="#d4d4d4"/>
<rect x="572" y="485" width="532" height="1" fill="#d4d4d4"/>
<rect x="837" y="466" width="1" height="20" fill="#d4d4d4"/>
<rect x="572" y="486" width="532" height="19" fill="#ebebeb"/>
<rect x="572" y="505" width="532" height="1" fill="#d4d4d4"/>
<rect x="837" y="486" width="1" height="20" fill="#d4d4d4"/>
<rect x="572" y="525" width="532" height="1" fill="#d4d4d4"/>
<rect x="837" y="506" width="1" height="20" fill="#d4d4d4"/>
<rect x="572" y="526" width="532" height="19" fill="#ebebeb"/>
<rect x="572" y="545" width="532" height="1" fill="#d4d4d4"/>
<rect x="837" y="526" width="1" height="20" fill="#d4d4d4"/>
<rect x="572" y="565" width="532" height="1" fill="#d4d4d4"/>
<rect x="837" y="546" width="1" height="20" fill="#d4d4d4"/>
<rect x="572" y="566" width="532" height="19" fill="#ebebeb"/>
<rect x="572" y="585" width="532" height="1" fill="#d4d4d4"/>
<rect x="837" y="566" width="1" height="20" fill="#d4d4d4"/>
<rect x="572" y="605" width="532" height="1" fill="#d4d4d4"/>
<rect x="837" y="586" width="1" height="20" fill="#d4d4d4"/>
<rect x="572" y="606" width="532" height="19" fill="#ebebeb"/>
<rect x="572" y="625" width="532" height="1" fill="#d4d4d4"/>
<rect x="837" y="606" width="1" height="20" fill="#d4d4d4"/>
<rect x="572" y="645" width="532" height="1" fill="#d4d4d4"/>
<rect x="837" y="626" width="1" height="20" fill="#d4d4d4"/>
<rect x="572" y="646" width="532" height="19" fill="#ebebeb"/>
<rect x="572" y="665" width="532" height="1" fill="#d4d4d4"/>
<rect x="837" y="646" width="1" height="20" fill="#d4d4d4"/>
<rect x="572" y="685" width="532" height="1" fill="#d4d4d4"/>
<rect x="837" y="666" width="1" height="20" fill="#d4d4d4"/>
<rect x="572" y="686" width="532" height="19" fill="#ebebeb"/>
<rect x="572" y="705" width="532" height="1" fill="#d4d4d4"/>
<rect x="837" y="686" width="1" height="20" fill="#d4d4d4"/>
<rect x="572" y="725" width="532" height="1" fill="#d4d4d4"/>
<rect x="837" y="706" width="1" height="20" fill="#d4d4d4"/>
<rect x="572" y="726" width="532" height="19" fill="#ebebeb"/>
<rect x="572" y="745" width="532" height="1" fill="#d4d4d4"/>
<rect x="837" y="726" width="1" height="20" fill="#d4d4d4"/>
<rect x="572" y="765" width="532" height="1" fill="#d4d4d4"/>
<rect x="837" y="746" width="1" height="20" fill="#d4d4d4"/>
<rect x="1115" y="715" width="121" height="24" fill="#adadad"/>
<rect x="1116" y="716" width="119" height="22" fill="#e1e1e1"/>
<rect x="1115" y="752" width="121" height="24" fill="#adadad"/>
<rect x="1116" y="753" width="119" height="22" fill="#e1e1e1"/>
<rect x="968" y="789" width="86" height="24" fill="#0078d7"/>
<rect x="969" y="790" width="84" height="22" fill="#e5f1fb"/>
<rect x="1063" y="789" width="86" height="24" fill="#adadad"/>
<rect x="1064" y="790" width="84" height="22" fill="#e1e1e1"/>
<rect x="1157" y="789" width="86" height="24" fill="#adadad"/>
<rect x="1158" y="790" width="84" height="22" fill="#e1e1e1"/>
<rect x="1247" y="812" width="2" height="2" fill="#bfbfbf"/>
<rect x="1244" y="815" width="2" height="2" fill="#bfbfbf"/>
<rect x="1247" y="815" width="2" height="2" fill="#bfbfbf"/>
<rect x="1241" y="818" width="2" height="2" fill="#bfbfbf"/>
<rect x="1244" y="818" width="2" height="2" fill="#bfbfbf"/>
<rect x="1247" y="818" width="2" height="2" fill="#bfbfbf"/>
</g>
<text x="559" y="109" font-family="'Liberation Sans','Noto Sans CJK JP',sans-serif" font-size="12" fill="#000" textLength="182.5" lengthAdjust="spacingAndGlyphs" xml:space="preserve">Custom Indicator - MA-PO_on_Sto</text>
<text x="1180.5" y="109" font-family="'Liberation Sans','Noto Sans CJK JP',sans-serif" font-size="12.5" fill="#000" xml:space="preserve">?</text>
<path d="M1223.5 99 L1233.5 109 M1233.5 99 L1223.5 109" stroke="#000" stroke-width="1.1" fill="none"/>
<text x="566" y="145" font-family="'Liberation Sans','Noto Sans CJK JP',sans-serif" font-size="12" fill="#000" textLength="68" lengthAdjust="spacingAndGlyphs" xml:space="preserve">バージョン情報</text>
<text x="646.5" y="145" font-family="'Liberation Sans','Noto Sans CJK JP',sans-serif" font-size="12" fill="#000" textLength="23.5" lengthAdjust="spacingAndGlyphs" xml:space="preserve">全般</text>
<text x="694.5" y="143" font-family="'Liberation Sans','Noto Sans CJK JP',sans-serif" font-size="12" fill="#000" textLength="83.5" lengthAdjust="spacingAndGlyphs" xml:space="preserve">パラメーターの入力</text>
<text x="791.5" y="145" font-family="'Liberation Sans','Noto Sans CJK JP',sans-serif" font-size="12" fill="#000" textLength="44.5" lengthAdjust="spacingAndGlyphs" xml:space="preserve">色の設定</text>
<text x="849" y="145" font-family="'Liberation Sans','Noto Sans CJK JP',sans-serif" font-size="12" fill="#000" textLength="47" lengthAdjust="spacingAndGlyphs" xml:space="preserve">表示選択</text>
<text x="578.5" y="178" font-family="'Liberation Sans','Noto Sans CJK JP',sans-serif" font-size="12" fill="#000" textLength="23.5" lengthAdjust="spacingAndGlyphs" xml:space="preserve">変数</text>
<text x="844" y="178" font-family="'Liberation Sans','Noto Sans CJK JP',sans-serif" font-size="12" fill="#000" xml:space="preserve">値</text>
<g transform="translate(573 188)"><path d="M0.5 2 Q0.5 0.5 2 0.5 L12.2 0.5 L15.5 3.8 L15.5 14.3 L13.5 15.7 L10.4 12.6 L9.0 13.8 L7.6 12.6 L6.4 13.9 L5.0 12.8 L3.3 14.7 L1.9 13.4 L0.5 14.9 Z" fill="url(#gY)" stroke="#cfb955" stroke-width="1" stroke-linejoin="round"/><path d="M12.2 0.5 L12.2 3.8 L15.5 3.8 Z" fill="#fffbd2" stroke="#cfb955" stroke-width="0.8" stroke-linejoin="round"/></g>
<text x="574.5" y="198.8" font-family="'Liberation Sans','Noto Sans CJK JP',sans-serif" font-size="9.6" fill="#4e4200" textLength="9.3" lengthAdjust="spacingAndGlyphs" stroke="#4e4200" stroke-width="0.25" xml:space="preserve">ab</text>
<text x="593.5" y="200" font-family="'Liberation Sans','Noto Sans CJK JP',sans-serif" font-size="12" fill="#000" textLength="29.8" lengthAdjust="spacingAndGlyphs" xml:space="preserve">note1</text>
<text x="841" y="200" font-family="'Liberation Sans','Noto Sans CJK JP',sans-serif" font-size="12" fill="#000" textLength="62.2" lengthAdjust="spacingAndGlyphs" xml:space="preserve">Alrat Switch</text>
<g transform="translate(573 208)"><path d="M0.5 2 Q0.5 0.5 2 0.5 L12.2 0.5 L15.5 3.8 L15.5 14.3 L13.5 15.7 L10.4 12.6 L9.0 13.8 L7.6 12.6 L6.4 13.9 L5.0 12.8 L3.3 14.7 L1.9 13.4 L0.5 14.9 Z" fill="url(#gG)" stroke="#5cb570" stroke-width="1" stroke-linejoin="round"/><path d="M12.2 0.5 L12.2 3.8 L15.5 3.8 Z" fill="#d6fcd8" stroke="#5cb570" stroke-width="0.8" stroke-linejoin="round"/></g>
<g transform="translate(573 208)" stroke="#0b6a14" fill="none" stroke-linecap="round" stroke-linejoin="round"><path d="M2.3 9.7 L3.6 9.7 L8.3 5.1" stroke-width="1.4"/><path d="M9.3 8.3 L9.8 9.1 L12.8 9.4" stroke-width="1.4"/></g>
<text x="593.5" y="220" font-family="'Liberation Sans','Noto Sans CJK JP',sans-serif" font-size="12" fill="#000" textLength="40.2" lengthAdjust="spacingAndGlyphs" xml:space="preserve">AlertOn</text>
<text x="841" y="220" font-family="'Liberation Sans','Noto Sans CJK JP',sans-serif" font-size="12" fill="#000" textLength="19.6" lengthAdjust="spacingAndGlyphs" xml:space="preserve">true</text>
<g transform="translate(573 228)"><path d="M0.5 2 Q0.5 0.5 2 0.5 L12.2 0.5 L15.5 3.8 L15.5 14.3 L13.5 15.7 L10.4 12.6 L9.0 13.8 L7.6 12.6 L6.4 13.9 L5.0 12.8 L3.3 14.7 L1.9 13.4 L0.5 14.9 Z" fill="url(#gG)" stroke="#5cb570" stroke-width="1" stroke-linejoin="round"/><path d="M12.2 0.5 L12.2 3.8 L15.5 3.8 Z" fill="#d6fcd8" stroke="#5cb570" stroke-width="0.8" stroke-linejoin="round"/></g>
<g transform="translate(573 228)" stroke="#0b6a14" fill="none" stroke-linecap="round" stroke-linejoin="round"><path d="M2.3 9.7 L3.6 9.7 L8.3 5.1" stroke-width="1.4"/><path d="M9.3 8.3 L9.8 9.1 L12.8 9.4" stroke-width="1.4"/></g>
<text x="593.5" y="240" font-family="'Liberation Sans','Noto Sans CJK JP',sans-serif" font-size="12" fill="#000" textLength="42.7" lengthAdjust="spacingAndGlyphs" xml:space="preserve">EmailOn</text>
<text x="841" y="240" font-family="'Liberation Sans','Noto Sans CJK JP',sans-serif" font-size="12" fill="#000" textLength="19.6" lengthAdjust="spacingAndGlyphs" xml:space="preserve">true</text>
<g transform="translate(573 248)"><path d="M0.5 2 Q0.5 0.5 2 0.5 L12.2 0.5 L15.5 3.8 L15.5 14.3 L13.5 15.7 L10.4 12.6 L9.0 13.8 L7.6 12.6 L6.4 13.9 L5.0 12.8 L3.3 14.7 L1.9 13.4 L0.5 14.9 Z" fill="url(#gY)" stroke="#cfb955" stroke-width="1" stroke-linejoin="round"/><path d="M12.2 0.5 L12.2 3.8 L15.5 3.8 Z" fill="#fffbd2" stroke="#cfb955" stroke-width="0.8" stroke-linejoin="round"/></g>
<text x="574.5" y="258.8" font-family="'Liberation Sans','Noto Sans CJK JP',sans-serif" font-size="9.6" fill="#4e4200" textLength="9.3" lengthAdjust="spacingAndGlyphs" stroke="#4e4200" stroke-width="0.25" xml:space="preserve">ab</text>
<text x="593.5" y="260" font-family="'Liberation Sans','Noto Sans CJK JP',sans-serif" font-size="12" fill="#000" textLength="29.8" lengthAdjust="spacingAndGlyphs" xml:space="preserve">note2</text>
<text x="841" y="260" font-family="'Liberation Sans','Noto Sans CJK JP',sans-serif" font-size="12" fill="#000" textLength="62.2" lengthAdjust="spacingAndGlyphs" xml:space="preserve">Arrow Code</text>
<g transform="translate(573 268)"><path d="M0.5 2 Q0.5 0.5 2 0.5 L12.2 0.5 L15.5 3.8 L15.5 14.3 L13.5 15.7 L10.4 12.6 L9.0 13.8 L7.6 12.6 L6.4 13.9 L5.0 12.8 L3.3 14.7 L1.9 13.4 L0.5 14.9 Z" fill="url(#gB)" stroke="#74a3d6" stroke-width="1" stroke-linejoin="round"/><path d="M12.2 0.5 L12.2 3.8 L15.5 3.8 Z" fill="#deeefd" stroke="#74a3d6" stroke-width="0.8" stroke-linejoin="round"/></g>
<text x="574.5" y="279.0" font-family="'Liberation Sans','Noto Sans CJK JP',sans-serif" font-size="7.3" fill="#082a58" textLength="10.6" lengthAdjust="spacingAndGlyphs" font-weight="bold" stroke="#082a58" stroke-width="0.2" xml:space="preserve">123</text>
<text x="593.5" y="280" font-family="'Liberation Sans','Noto Sans CJK JP',sans-serif" font-size="12" fill="#000" textLength="41.7" lengthAdjust="spacingAndGlyphs" xml:space="preserve">CodeUp</text>
<text x="841" y="280" font-family="'Liberation Sans','Noto Sans CJK JP',sans-serif" font-size="12" fill="#000" textLength="19.0" lengthAdjust="spacingAndGlyphs" xml:space="preserve">233</text>
<g transform="translate(573 288)"><path d="M0.5 2 Q0.5 0.5 2 0.5 L12.2 0.5 L15.5 3.8 L15.5 14.3 L13.5 15.7 L10.4 12.6 L9.0 13.8 L7.6 12.6 L6.4 13.9 L5.0 12.8 L3.3 14.7 L1.9 13.4 L0.5 14.9 Z" fill="url(#gB)" stroke="#74a3d6" stroke-width="1" stroke-linejoin="round"/><path d="M12.2 0.5 L12.2 3.8 L15.5 3.8 Z" fill="#deeefd" stroke="#74a3d6" stroke-width="0.8" stroke-linejoin="round"/></g>
<text x="574.5" y="299.0" font-family="'Liberation Sans','Noto Sans CJK JP',sans-serif" font-size="7.3" fill="#082a58" textLength="10.6" lengthAdjust="spacingAndGlyphs" font-weight="bold" stroke="#082a58" stroke-width="0.2" xml:space="preserve">123</text>
<text x="593.5" y="300" font-family="'Liberation Sans','Noto Sans CJK JP',sans-serif" font-size="12" fill="#000" textLength="57.7" lengthAdjust="spacingAndGlyphs" xml:space="preserve">CodeDown</text>
<text x="841" y="300" font-family="'Liberation Sans','Noto Sans CJK JP',sans-serif" font-size="12" fill="#000" textLength="19.0" lengthAdjust="spacingAndGlyphs" xml:space="preserve">234</text>
<g transform="translate(573 308)"><path d="M0.5 2 Q0.5 0.5 2 0.5 L12.2 0.5 L15.5 3.8 L15.5 14.3 L13.5 15.7 L10.4 12.6 L9.0 13.8 L7.6 12.6 L6.4 13.9 L5.0 12.8 L3.3 14.7 L1.9 13.4 L0.5 14.9 Z" fill="url(#gY)" stroke="#cfb955" stroke-width="1" stroke-linejoin="round"/><path d="M12.2 0.5 L12.2 3.8 L15.5 3.8 Z" fill="#fffbd2" stroke="#cfb955" stroke-width="0.8" stroke-linejoin="round"/></g>
<text x="574.5" y="318.8" font-family="'Liberation Sans','Noto Sans CJK JP',sans-serif" font-size="9.6" fill="#4e4200" textLength="9.3" lengthAdjust="spacingAndGlyphs" stroke="#4e4200" stroke-width="0.25" xml:space="preserve">ab</text>
<text x="593.5" y="320" font-family="'Liberation Sans','Noto Sans CJK JP',sans-serif" font-size="12" fill="#000" textLength="29.8" lengthAdjust="spacingAndGlyphs" xml:space="preserve">note3</text>
<text x="841" y="320" font-family="'Liberation Sans','Noto Sans CJK JP',sans-serif" font-size="12" fill="#000" textLength="58.7" lengthAdjust="spacingAndGlyphs" xml:space="preserve">MA Setting</text>
<g transform="translate(573 328)"><path d="M0.5 2 Q0.5 0.5 2 0.5 L12.2 0.5 L15.5 3.8 L15.5 14.3 L13.5 15.7 L10.4 12.6 L9.0 13.8 L7.6 12.6 L6.4 13.9 L5.0 12.8 L3.3 14.7 L1.9 13.4 L0.5 14.9 Z" fill="url(#gB)" stroke="#74a3d6" stroke-width="1" stroke-linejoin="round"/><path d="M12.2 0.5 L12.2 3.8 L15.5 3.8 Z" fill="#deeefd" stroke="#74a3d6" stroke-width="0.8" stroke-linejoin="round"/></g>
<text x="574.5" y="339.0" font-family="'Liberation Sans','Noto Sans CJK JP',sans-serif" font-size="7.3" fill="#082a58" textLength="10.6" lengthAdjust="spacingAndGlyphs" font-weight="bold" stroke="#082a58" stroke-width="0.2" xml:space="preserve">123</text>
<text x="593.5" y="340" font-family="'Liberation Sans','Noto Sans CJK JP',sans-serif" font-size="12" fill="#000" textLength="70.2" lengthAdjust="spacingAndGlyphs" xml:space="preserve">MA_Period01</text>
<text x="841" y="340" font-family="'Liberation Sans','Noto Sans CJK JP',sans-serif" font-size="12" fill="#000" textLength="12.7" lengthAdjust="spacingAndGlyphs" xml:space="preserve">75</text>
<g transform="translate(573 348)"><path d="M0.5 2 Q0.5 0.5 2 0.5 L12.2 0.5 L15.5 3.8 L15.5 14.3 L13.5 15.7 L10.4 12.6 L9.0 13.8 L7.6 12.6 L6.4 13.9 L5.0 12.8 L3.3 14.7 L1.9 13.4 L0.5 14.9 Z" fill="url(#gB)" stroke="#74a3d6" stroke-width="1" stroke-linejoin="round"/><path d="M12.2 0.5 L12.2 3.8 L15.5 3.8 Z" fill="#deeefd" stroke="#74a3d6" stroke-width="0.8" stroke-linejoin="round"/></g>
<text x="574.5" y="359.0" font-family="'Liberation Sans','Noto Sans CJK JP',sans-serif" font-size="7.3" fill="#082a58" textLength="10.6" lengthAdjust="spacingAndGlyphs" font-weight="bold" stroke="#082a58" stroke-width="0.2" xml:space="preserve">123</text>
<text x="593.5" y="360" font-family="'Liberation Sans','Noto Sans CJK JP',sans-serif" font-size="12" fill="#000" textLength="200.2" lengthAdjust="spacingAndGlyphs" xml:space="preserve">0 = sma, 1 = ema, 2 = smma, 3 = lwma</text>
<text x="841" y="360" font-family="'Liberation Sans','Noto Sans CJK JP',sans-serif" font-size="12" fill="#000" textLength="6.3" lengthAdjust="spacingAndGlyphs" xml:space="preserve">0</text>
<g transform="translate(573 368)"><path d="M0.5 2 Q0.5 0.5 2 0.5 L12.2 0.5 L15.5 3.8 L15.5 14.3 L13.5 15.7 L10.4 12.6 L9.0 13.8 L7.6 12.6 L6.4 13.9 L5.0 12.8 L3.3 14.7 L1.9 13.4 L0.5 14.9 Z" fill="url(#gB)" stroke="#74a3d6" stroke-width="1" stroke-linejoin="round"/><path d="M12.2 0.5 L12.2 3.8 L15.5 3.8 Z" fill="#deeefd" stroke="#74a3d6" stroke-width="0.8" stroke-linejoin="round"/></g>
<text x="574.5" y="379.0" font-family="'Liberation Sans','Noto Sans CJK JP',sans-serif" font-size="7.3" fill="#082a58" textLength="10.6" lengthAdjust="spacingAndGlyphs" font-weight="bold" stroke="#082a58" stroke-width="0.2" xml:space="preserve">123</text>
<text x="593.5" y="380" font-family="'Liberation Sans','Noto Sans CJK JP',sans-serif" font-size="12" fill="#000" textLength="60.0" lengthAdjust="spacingAndGlyphs" xml:space="preserve">MA_Shift01</text>
<text x="841" y="380" font-family="'Liberation Sans','Noto Sans CJK JP',sans-serif" font-size="12" fill="#000" textLength="6.3" lengthAdjust="spacingAndGlyphs" xml:space="preserve">0</text>
<g transform="translate(573 388)"><path d="M0.5 2 Q0.5 0.5 2 0.5 L12.2 0.5 L15.5 3.8 L15.5 14.3 L13.5 15.7 L10.4 12.6 L9.0 13.8 L7.6 12.6 L6.4 13.9 L5.0 12.8 L3.3 14.7 L1.9 13.4 L0.5 14.9 Z" fill="url(#gB)" stroke="#74a3d6" stroke-width="1" stroke-linejoin="round"/><path d="M12.2 0.5 L12.2 3.8 L15.5 3.8 Z" fill="#deeefd" stroke="#74a3d6" stroke-width="0.8" stroke-linejoin="round"/></g>
<text x="574.5" y="399.0" font-family="'Liberation Sans','Noto Sans CJK JP',sans-serif" font-size="7.3" fill="#082a58" textLength="10.6" lengthAdjust="spacingAndGlyphs" font-weight="bold" stroke="#082a58" stroke-width="0.2" xml:space="preserve">123</text>
<text x="593.5" y="400" font-family="'Liberation Sans','Noto Sans CJK JP',sans-serif" font-size="12" fill="#000" textLength="61.7" lengthAdjust="spacingAndGlyphs" xml:space="preserve">MA_Price01</text>
<text x="841" y="400" font-family="'Liberation Sans','Noto Sans CJK JP',sans-serif" font-size="12" fill="#000" textLength="6.3" lengthAdjust="spacingAndGlyphs" xml:space="preserve">0</text>
<g transform="translate(573 408)"><path d="M0.5 2 Q0.5 0.5 2 0.5 L12.2 0.5 L15.5 3.8 L15.5 14.3 L13.5 15.7 L10.4 12.6 L9.0 13.8 L7.6 12.6 L6.4 13.9 L5.0 12.8 L3.3 14.7 L1.9 13.4 L0.5 14.9 Z" fill="url(#gY)" stroke="#cfb955" stroke-width="1" stroke-linejoin="round"/><path d="M12.2 0.5 L12.2 3.8 L15.5 3.8 Z" fill="#fffbd2" stroke="#cfb955" stroke-width="0.8" stroke-linejoin="round"/></g>
<text x="574.5" y="418.8" font-family="'Liberation Sans','Noto Sans CJK JP',sans-serif" font-size="9.6" fill="#4e4200" textLength="9.3" lengthAdjust="spacingAndGlyphs" stroke="#4e4200" stroke-width="0.25" xml:space="preserve">ab</text>
<text x="593.5" y="420" font-family="'Liberation Sans','Noto Sans CJK JP',sans-serif" font-size="12" fill="#000" textLength="29.8" lengthAdjust="spacingAndGlyphs" xml:space="preserve">note4</text>
<text x="841" y="420" font-family="'Liberation Sans','Noto Sans CJK JP',sans-serif" font-size="12" fill="#000" textLength="58.7" lengthAdjust="spacingAndGlyphs" xml:space="preserve">MA Setting</text>
<g transform="translate(573 428)"><path d="M0.5 2 Q0.5 0.5 2 0.5 L12.2 0.5 L15.5 3.8 L15.5 14.3 L13.5 15.7 L10.4 12.6 L9.0 13.8 L7.6 12.6 L6.4 13.9 L5.0 12.8 L3.3 14.7 L1.9 13.4 L0.5 14.9 Z" fill="url(#gB)" stroke="#74a3d6" stroke-width="1" stroke-linejoin="round"/><path d="M12.2 0.5 L12.2 3.8 L15.5 3.8 Z" fill="#deeefd" stroke="#74a3d6" stroke-width="0.8" stroke-linejoin="round"/></g>
<text x="574.5" y="439.0" font-family="'Liberation Sans','Noto Sans CJK JP',sans-serif" font-size="7.3" fill="#082a58" textLength="10.6" lengthAdjust="spacingAndGlyphs" font-weight="bold" stroke="#082a58" stroke-width="0.2" xml:space="preserve">123</text>
<text x="593.5" y="440" font-family="'Liberation Sans','Noto Sans CJK JP',sans-serif" font-size="12" fill="#000" textLength="70.2" lengthAdjust="spacingAndGlyphs" xml:space="preserve">MA_Period02</text>
<text x="841" y="440" font-family="'Liberation Sans','Noto Sans CJK JP',sans-serif" font-size="12" fill="#000" textLength="12.7" lengthAdjust="spacingAndGlyphs" xml:space="preserve">20</text>
<g transform="translate(573 448)"><path d="M0.5 2 Q0.5 0.5 2 0.5 L12.2 0.5 L15.5 3.8 L15.5 14.3 L13.5 15.7 L10.4 12.6 L9.0 13.8 L7.6 12.6 L6.4 13.9 L5.0 12.8 L3.3 14.7 L1.9 13.4 L0.5 14.9 Z" fill="url(#gB)" stroke="#74a3d6" stroke-width="1" stroke-linejoin="round"/><path d="M12.2 0.5 L12.2 3.8 L15.5 3.8 Z" fill="#deeefd" stroke="#74a3d6" stroke-width="0.8" stroke-linejoin="round"/></g>
<text x="574.5" y="459.0" font-family="'Liberation Sans','Noto Sans CJK JP',sans-serif" font-size="7.3" fill="#082a58" textLength="10.6" lengthAdjust="spacingAndGlyphs" font-weight="bold" stroke="#082a58" stroke-width="0.2" xml:space="preserve">123</text>
<text x="593.5" y="460" font-family="'Liberation Sans','Noto Sans CJK JP',sans-serif" font-size="12" fill="#000" textLength="200.2" lengthAdjust="spacingAndGlyphs" xml:space="preserve">0 = sma, 1 = ema, 2 = smma, 3 = lwma</text>
<text x="841" y="460" font-family="'Liberation Sans','Noto Sans CJK JP',sans-serif" font-size="12" fill="#000" textLength="6.3" lengthAdjust="spacingAndGlyphs" xml:space="preserve">0</text>
<g transform="translate(573 468)"><path d="M0.5 2 Q0.5 0.5 2 0.5 L12.2 0.5 L15.5 3.8 L15.5 14.3 L13.5 15.7 L10.4 12.6 L9.0 13.8 L7.6 12.6 L6.4 13.9 L5.0 12.8 L3.3 14.7 L1.9 13.4 L0.5 14.9 Z" fill="url(#gB)" stroke="#74a3d6" stroke-width="1" stroke-linejoin="round"/><path d="M12.2 0.5 L12.2 3.8 L15.5 3.8 Z" fill="#deeefd" stroke="#74a3d6" stroke-width="0.8" stroke-linejoin="round"/></g>
<text x="574.5" y="479.0" font-family="'Liberation Sans','Noto Sans CJK JP',sans-serif" font-size="7.3" fill="#082a58" textLength="10.6" lengthAdjust="spacingAndGlyphs" font-weight="bold" stroke="#082a58" stroke-width="0.2" xml:space="preserve">123</text>
<text x="593.5" y="480" font-family="'Liberation Sans','Noto Sans CJK JP',sans-serif" font-size="12" fill="#000" textLength="60.0" lengthAdjust="spacingAndGlyphs" xml:space="preserve">MA_Shift02</text>
<text x="841" y="480" font-family="'Liberation Sans','Noto Sans CJK JP',sans-serif" font-size="12" fill="#000" textLength="6.3" lengthAdjust="spacingAndGlyphs" xml:space="preserve">0</text>
<g transform="translate(573 488)"><path d="M0.5 2 Q0.5 0.5 2 0.5 L12.2 0.5 L15.5 3.8 L15.5 14.3 L13.5 15.7 L10.4 12.6 L9.0 13.8 L7.6 12.6 L6.4 13.9 L5.0 12.8 L3.3 14.7 L1.9 13.4 L0.5 14.9 Z" fill="url(#gB)" stroke="#74a3d6" stroke-width="1" stroke-linejoin="round"/><path d="M12.2 0.5 L12.2 3.8 L15.5 3.8 Z" fill="#deeefd" stroke="#74a3d6" stroke-width="0.8" stroke-linejoin="round"/></g>
<text x="574.5" y="499.0" font-family="'Liberation Sans','Noto Sans CJK JP',sans-serif" font-size="7.3" fill="#082a58" textLength="10.6" lengthAdjust="spacingAndGlyphs" font-weight="bold" stroke="#082a58" stroke-width="0.2" xml:space="preserve">123</text>
<text x="593.5" y="500" font-family="'Liberation Sans','Noto Sans CJK JP',sans-serif" font-size="12" fill="#000" textLength="61.7" lengthAdjust="spacingAndGlyphs" xml:space="preserve">MA_Price02</text>
<text x="841" y="500" font-family="'Liberation Sans','Noto Sans CJK JP',sans-serif" font-size="12" fill="#000" textLength="6.3" lengthAdjust="spacingAndGlyphs" xml:space="preserve">0</text>
<g transform="translate(573 508)"><path d="M0.5 2 Q0.5 0.5 2 0.5 L12.2 0.5 L15.5 3.8 L15.5 14.3 L13.5 15.7 L10.4 12.6 L9.0 13.8 L7.6 12.6 L6.4 13.9 L5.0 12.8 L3.3 14.7 L1.9 13.4 L0.5 14.9 Z" fill="url(#gY)" stroke="#cfb955" stroke-width="1" stroke-linejoin="round"/><path d="M12.2 0.5 L12.2 3.8 L15.5 3.8 Z" fill="#fffbd2" stroke="#cfb955" stroke-width="0.8" stroke-linejoin="round"/></g>
<text x="574.5" y="518.8" font-family="'Liberation Sans','Noto Sans CJK JP',sans-serif" font-size="9.6" fill="#4e4200" textLength="9.3" lengthAdjust="spacingAndGlyphs" stroke="#4e4200" stroke-width="0.25" xml:space="preserve">ab</text>
<text x="593.5" y="520" font-family="'Liberation Sans','Noto Sans CJK JP',sans-serif" font-size="12" fill="#000" textLength="29.8" lengthAdjust="spacingAndGlyphs" xml:space="preserve">note5</text>
<text x="841" y="520" font-family="'Liberation Sans','Noto Sans CJK JP',sans-serif" font-size="12" fill="#000" textLength="58.7" lengthAdjust="spacingAndGlyphs" xml:space="preserve">MA Setting</text>
<g transform="translate(573 528)"><path d="M0.5 2 Q0.5 0.5 2 0.5 L12.2 0.5 L15.5 3.8 L15.5 14.3 L13.5 15.7 L10.4 12.6 L9.0 13.8 L7.6 12.6 L6.4 13.9 L5.0 12.8 L3.3 14.7 L1.9 13.4 L0.5 14.9 Z" fill="url(#gB)" stroke="#74a3d6" stroke-width="1" stroke-linejoin="round"/><path d="M12.2 0.5 L12.2 3.8 L15.5 3.8 Z" fill="#deeefd" stroke="#74a3d6" stroke-width="0.8" stroke-linejoin="round"/></g>
<text x="574.5" y="539.0" font-family="'Liberation Sans','Noto Sans CJK JP',sans-serif" font-size="7.3" fill="#082a58" textLength="10.6" lengthAdjust="spacingAndGlyphs" font-weight="bold" stroke="#082a58" stroke-width="0.2" xml:space="preserve">123</text>
<text x="593.5" y="540" font-family="'Liberation Sans','Noto Sans CJK JP',sans-serif" font-size="12" fill="#000" textLength="70.2" lengthAdjust="spacingAndGlyphs" xml:space="preserve">MA_Period03</text>
<text x="841" y="540" font-family="'Liberation Sans','Noto Sans CJK JP',sans-serif" font-size="12" fill="#000" textLength="12.7" lengthAdjust="spacingAndGlyphs" xml:space="preserve">10</text>
<g transform="translate(573 548)"><path d="M0.5 2 Q0.5 0.5 2 0.5 L12.2 0.5 L15.5 3.8 L15.5 14.3 L13.5 15.7 L10.4 12.6 L9.0 13.8 L7.6 12.6 L6.4 13.9 L5.0 12.8 L3.3 14.7 L1.9 13.4 L0.5 14.9 Z" fill="url(#gB)" stroke="#74a3d6" stroke-width="1" stroke-linejoin="round"/><path d="M12.2 0.5 L12.2 3.8 L15.5 3.8 Z" fill="#deeefd" stroke="#74a3d6" stroke-width="0.8" stroke-linejoin="round"/></g>
<text x="574.5" y="559.0" font-family="'Liberation Sans','Noto Sans CJK JP',sans-serif" font-size="7.3" fill="#082a58" textLength="10.6" lengthAdjust="spacingAndGlyphs" font-weight="bold" stroke="#082a58" stroke-width="0.2" xml:space="preserve">123</text>
<text x="593.5" y="560" font-family="'Liberation Sans','Noto Sans CJK JP',sans-serif" font-size="12" fill="#000" textLength="200.2" lengthAdjust="spacingAndGlyphs" xml:space="preserve">0 = sma, 1 = ema, 2 = smma, 3 = lwma</text>
<text x="841" y="560" font-family="'Liberation Sans','Noto Sans CJK JP',sans-serif" font-size="12" fill="#000" textLength="6.3" lengthAdjust="spacingAndGlyphs" xml:space="preserve">0</text>
<g transform="translate(573 568)"><path d="M0.5 2 Q0.5 0.5 2 0.5 L12.2 0.5 L15.5 3.8 L15.5 14.3 L13.5 15.7 L10.4 12.6 L9.0 13.8 L7.6 12.6 L6.4 13.9 L5.0 12.8 L3.3 14.7 L1.9 13.4 L0.5 14.9 Z" fill="url(#gB)" stroke="#74a3d6" stroke-width="1" stroke-linejoin="round"/><path d="M12.2 0.5 L12.2 3.8 L15.5 3.8 Z" fill="#deeefd" stroke="#74a3d6" stroke-width="0.8" stroke-linejoin="round"/></g>
<text x="574.5" y="579.0" font-family="'Liberation Sans','Noto Sans CJK JP',sans-serif" font-size="7.3" fill="#082a58" textLength="10.6" lengthAdjust="spacingAndGlyphs" font-weight="bold" stroke="#082a58" stroke-width="0.2" xml:space="preserve">123</text>
<text x="593.5" y="580" font-family="'Liberation Sans','Noto Sans CJK JP',sans-serif" font-size="12" fill="#000" textLength="60.0" lengthAdjust="spacingAndGlyphs" xml:space="preserve">MA_Shift03</text>
<text x="841" y="580" font-family="'Liberation Sans','Noto Sans CJK JP',sans-serif" font-size="12" fill="#000" textLength="6.3" lengthAdjust="spacingAndGlyphs" xml:space="preserve">0</text>
<g transform="translate(573 588)"><path d="M0.5 2 Q0.5 0.5 2 0.5 L12.2 0.5 L15.5 3.8 L15.5 14.3 L13.5 15.7 L10.4 12.6 L9.0 13.8 L7.6 12.6 L6.4 13.9 L5.0 12.8 L3.3 14.7 L1.9 13.4 L0.5 14.9 Z" fill="url(#gB)" stroke="#74a3d6" stroke-width="1" stroke-linejoin="round"/><path d="M12.2 0.5 L12.2 3.8 L15.5 3.8 Z" fill="#deeefd" stroke="#74a3d6" stroke-width="0.8" stroke-linejoin="round"/></g>
<text x="574.5" y="599.0" font-family="'Liberation Sans','Noto Sans CJK JP',sans-serif" font-size="7.3" fill="#082a58" textLength="10.6" lengthAdjust="spacingAndGlyphs" font-weight="bold" stroke="#082a58" stroke-width="0.2" xml:space="preserve">123</text>
<text x="593.5" y="600" font-family="'Liberation Sans','Noto Sans CJK JP',sans-serif" font-size="12" fill="#000" textLength="61.7" lengthAdjust="spacingAndGlyphs" xml:space="preserve">MA_Price03</text>
<text x="841" y="600" font-family="'Liberation Sans','Noto Sans CJK JP',sans-serif" font-size="12" fill="#000" textLength="6.3" lengthAdjust="spacingAndGlyphs" xml:space="preserve">0</text>
<g transform="translate(573 608)"><path d="M0.5 2 Q0.5 0.5 2 0.5 L12.2 0.5 L15.5 3.8 L15.5 14.3 L13.5 15.7 L10.4 12.6 L9.0 13.8 L7.6 12.6 L6.4 13.9 L5.0 12.8 L3.3 14.7 L1.9 13.4 L0.5 14.9 Z" fill="url(#gY)" stroke="#cfb955" stroke-width="1" stroke-linejoin="round"/><path d="M12.2 0.5 L12.2 3.8 L15.5 3.8 Z" fill="#fffbd2" stroke="#cfb955" stroke-width="0.8" stroke-linejoin="round"/></g>
<text x="574.5" y="618.8" font-family="'Liberation Sans','Noto Sans CJK JP',sans-serif" font-size="9.6" fill="#4e4200" textLength="9.3" lengthAdjust="spacingAndGlyphs" stroke="#4e4200" stroke-width="0.25" xml:space="preserve">ab</text>
<text x="593.5" y="620" font-family="'Liberation Sans','Noto Sans CJK JP',sans-serif" font-size="12" fill="#000" textLength="29.8" lengthAdjust="spacingAndGlyphs" xml:space="preserve">note6</text>
<text x="841" y="620" font-family="'Liberation Sans','Noto Sans CJK JP',sans-serif" font-size="12" fill="#000" textLength="98.7" lengthAdjust="spacingAndGlyphs" xml:space="preserve">Stochastics Setting</text>
<g transform="translate(573 628)"><path d="M0.5 2 Q0.5 0.5 2 0.5 L12.2 0.5 L15.5 3.8 L15.5 14.3 L13.5 15.7 L10.4 12.6 L9.0 13.8 L7.6 12.6 L6.4 13.9 L5.0 12.8 L3.3 14.7 L1.9 13.4 L0.5 14.9 Z" fill="url(#gB)" stroke="#74a3d6" stroke-width="1" stroke-linejoin="round"/><path d="M12.2 0.5 L12.2 3.8 L15.5 3.8 Z" fill="#deeefd" stroke="#74a3d6" stroke-width="0.8" stroke-linejoin="round"/></g>
<text x="574.5" y="639.0" font-family="'Liberation Sans','Noto Sans CJK JP',sans-serif" font-size="7.3" fill="#082a58" textLength="10.6" lengthAdjust="spacingAndGlyphs" font-weight="bold" stroke="#082a58" stroke-width="0.2" xml:space="preserve">123</text>
<text x="593.5" y="640" font-family="'Liberation Sans','Noto Sans CJK JP',sans-serif" font-size="12" fill="#000" textLength="45.2" lengthAdjust="spacingAndGlyphs" xml:space="preserve">K_Period</text>
<text x="841" y="640" font-family="'Liberation Sans','Noto Sans CJK JP',sans-serif" font-size="12" fill="#000" textLength="6.3" lengthAdjust="spacingAndGlyphs" xml:space="preserve">5</text>
<g transform="translate(573 648)"><path d="M0.5 2 Q0.5 0.5 2 0.5 L12.2 0.5 L15.5 3.8 L15.5 14.3 L13.5 15.7 L10.4 12.6 L9.0 13.8 L7.6 12.6 L6.4 13.9 L5.0 12.8 L3.3 14.7 L1.9 13.4 L0.5 14.9 Z" fill="url(#gB)" stroke="#74a3d6" stroke-width="1" stroke-linejoin="round"/><path d="M12.2 0.5 L12.2 3.8 L15.5 3.8 Z" fill="#deeefd" stroke="#74a3d6" stroke-width="0.8" stroke-linejoin="round"/></g>
<text x="574.5" y="659.0" font-family="'Liberation Sans','Noto Sans CJK JP',sans-serif" font-size="7.3" fill="#082a58" textLength="10.6" lengthAdjust="spacingAndGlyphs" font-weight="bold" stroke="#082a58" stroke-width="0.2" xml:space="preserve">123</text>
<text x="593.5" y="660" font-family="'Liberation Sans','Noto Sans CJK JP',sans-serif" font-size="12" fill="#000" textLength="46.5" lengthAdjust="spacingAndGlyphs" xml:space="preserve">D_Period</text>
<text x="841" y="660" font-family="'Liberation Sans','Noto Sans CJK JP',sans-serif" font-size="12" fill="#000" textLength="6.3" lengthAdjust="spacingAndGlyphs" xml:space="preserve">3</text>
<g transform="translate(573 668)"><path d="M0.5 2 Q0.5 0.5 2 0.5 L12.2 0.5 L15.5 3.8 L15.5 14.3 L13.5 15.7 L10.4 12.6 L9.0 13.8 L7.6 12.6 L6.4 13.9 L5.0 12.8 L3.3 14.7 L1.9 13.4 L0.5 14.9 Z" fill="url(#gB)" stroke="#74a3d6" stroke-width="1" stroke-linejoin="round"/><path d="M12.2 0.5 L12.2 3.8 L15.5 3.8 Z" fill="#deeefd" stroke="#74a3d6" stroke-width="0.8" stroke-linejoin="round"/></g>
<text x="574.5" y="679.0" font-family="'Liberation Sans','Noto Sans CJK JP',sans-serif" font-size="7.3" fill="#082a58" textLength="10.6" lengthAdjust="spacingAndGlyphs" font-weight="bold" stroke="#082a58" stroke-width="0.2" xml:space="preserve">123</text>
<text x="593.5" y="680" font-family="'Liberation Sans','Noto Sans CJK JP',sans-serif" font-size="12" fill="#000" textLength="41.4" lengthAdjust="spacingAndGlyphs" xml:space="preserve">Slowing</text>
<text x="841" y="680" font-family="'Liberation Sans','Noto Sans CJK JP',sans-serif" font-size="12" fill="#000" textLength="6.3" lengthAdjust="spacingAndGlyphs" xml:space="preserve">3</text>
<g transform="translate(573 688)"><path d="M0.5 2 Q0.5 0.5 2 0.5 L12.2 0.5 L15.5 3.8 L15.5 14.3 L13.5 15.7 L10.4 12.6 L9.0 13.8 L7.6 12.6 L6.4 13.9 L5.0 12.8 L3.3 14.7 L1.9 13.4 L0.5 14.9 Z" fill="url(#gB)" stroke="#74a3d6" stroke-width="1" stroke-linejoin="round"/><path d="M12.2 0.5 L12.2 3.8 L15.5 3.8 Z" fill="#deeefd" stroke="#74a3d6" stroke-width="0.8" stroke-linejoin="round"/></g>
<text x="574.5" y="699.0" font-family="'Liberation Sans','Noto Sans CJK JP',sans-serif" font-size="7.3" fill="#082a58" textLength="10.6" lengthAdjust="spacingAndGlyphs" font-weight="bold" stroke="#082a58" stroke-width="0.2" xml:space="preserve">123</text>
<text x="593.5" y="700" font-family="'Liberation Sans','Noto Sans CJK JP',sans-serif" font-size="12" fill="#000" textLength="62.5" lengthAdjust="spacingAndGlyphs" xml:space="preserve">sto_Method</text>
<text x="841" y="700" font-family="'Liberation Sans','Noto Sans CJK JP',sans-serif" font-size="12" fill="#000" textLength="6.3" lengthAdjust="spacingAndGlyphs" xml:space="preserve">0</text>
<g transform="translate(573 708)"><path d="M0.5 2 Q0.5 0.5 2 0.5 L12.2 0.5 L15.5 3.8 L15.5 14.3 L13.5 15.7 L10.4 12.6 L9.0 13.8 L7.6 12.6 L6.4 13.9 L5.0 12.8 L3.3 14.7 L1.9 13.4 L0.5 14.9 Z" fill="url(#gB)" stroke="#74a3d6" stroke-width="1" stroke-linejoin="round"/><path d="M12.2 0.5 L12.2 3.8 L15.5 3.8 Z" fill="#deeefd" stroke="#74a3d6" stroke-width="0.8" stroke-linejoin="round"/></g>
<text x="574.5" y="719.0" font-family="'Liberation Sans','Noto Sans CJK JP',sans-serif" font-size="7.3" fill="#082a58" textLength="10.6" lengthAdjust="spacingAndGlyphs" font-weight="bold" stroke="#082a58" stroke-width="0.2" xml:space="preserve">123</text>
<text x="593.5" y="720" font-family="'Liberation Sans','Noto Sans CJK JP',sans-serif" font-size="12" fill="#000" textLength="46.9" lengthAdjust="spacingAndGlyphs" xml:space="preserve">sto_Price</text>
<text x="841" y="720" font-family="'Liberation Sans','Noto Sans CJK JP',sans-serif" font-size="12" fill="#000" textLength="6.3" lengthAdjust="spacingAndGlyphs" xml:space="preserve">0</text>
<g transform="translate(573 728)"><path d="M0.5 2 Q0.5 0.5 2 0.5 L12.2 0.5 L15.5 3.8 L15.5 14.3 L13.5 15.7 L10.4 12.6 L9.0 13.8 L7.6 12.6 L6.4 13.9 L5.0 12.8 L3.3 14.7 L1.9 13.4 L0.5 14.9 Z" fill="url(#gB)" stroke="#74a3d6" stroke-width="1" stroke-linejoin="round"/><path d="M12.2 0.5 L12.2 3.8 L15.5 3.8 Z" fill="#deeefd" stroke="#74a3d6" stroke-width="0.8" stroke-linejoin="round"/></g>
<text x="574.5" y="739.0" font-family="'Liberation Sans','Noto Sans CJK JP',sans-serif" font-size="7.3" fill="#082a58" textLength="10.6" lengthAdjust="spacingAndGlyphs" font-weight="bold" stroke="#082a58" stroke-width="0.2" xml:space="preserve">123</text>
<text x="593.5" y="740" font-family="'Liberation Sans','Noto Sans CJK JP',sans-serif" font-size="12" fill="#000" textLength="49.8" lengthAdjust="spacingAndGlyphs" xml:space="preserve">Upper_LV</text>
<text x="841" y="740" font-family="'Liberation Sans','Noto Sans CJK JP',sans-serif" font-size="12" fill="#000" textLength="12.7" lengthAdjust="spacingAndGlyphs" xml:space="preserve">75</text>
<g transform="translate(573 748)"><path d="M0.5 2 Q0.5 0.5 2 0.5 L12.2 0.5 L15.5 3.8 L15.5 14.3 L13.5 15.7 L10.4 12.6 L9.0 13.8 L7.6 12.6 L6.4 13.9 L5.0 12.8 L3.3 14.7 L1.9 13.4 L0.5 14.9 Z" fill="url(#gB)" stroke="#74a3d6" stroke-width="1" stroke-linejoin="round"/><path d="M12.2 0.5 L12.2 3.8 L15.5 3.8 Z" fill="#deeefd" stroke="#74a3d6" stroke-width="0.8" stroke-linejoin="round"/></g>
<text x="574.5" y="759.0" font-family="'Liberation Sans','Noto Sans CJK JP',sans-serif" font-size="7.3" fill="#082a58" textLength="10.6" lengthAdjust="spacingAndGlyphs" font-weight="bold" stroke="#082a58" stroke-width="0.2" xml:space="preserve">123</text>
<text x="593.5" y="760" font-family="'Liberation Sans','Noto Sans CJK JP',sans-serif" font-size="12" fill="#000" textLength="49.8" lengthAdjust="spacingAndGlyphs" xml:space="preserve">Lower_LV</text>
<text x="841" y="760" font-family="'Liberation Sans','Noto Sans CJK JP',sans-serif" font-size="12" fill="#000" textLength="12.7" lengthAdjust="spacingAndGlyphs" xml:space="preserve">25</text>
<text x="1175.5" y="730.5" font-family="'Liberation Sans','Noto Sans CJK JP',sans-serif" font-size="12" fill="#000" text-anchor="middle" textLength="62" lengthAdjust="spacingAndGlyphs" xml:space="preserve">読み込み (L)</text>
<text x="1175.5" y="767.5" font-family="'Liberation Sans','Noto Sans CJK JP',sans-serif" font-size="12" fill="#000" text-anchor="middle" textLength="40" lengthAdjust="spacingAndGlyphs" xml:space="preserve">保存 (S)</text>
<text x="1011" y="804.5" font-family="'Liberation Sans','Noto Sans CJK JP',sans-serif" font-size="12" fill="#000" text-anchor="middle" textLength="16.5" lengthAdjust="spacingAndGlyphs" xml:space="preserve">OK</text>
<text x="1106" y="804.5" font-family="'Liberation Sans','Noto Sans CJK JP',sans-serif" font-size="12" fill="#000" text-anchor="middle" textLength="46" lengthAdjust="spacingAndGlyphs" xml:space="preserve">キャンセル</text>
<text x="1200" y="804.5" font-family="'Liberation Sans','Noto Sans CJK JP',sans-serif" font-size="12" fill="#000" text-anchor="middle" textLength="34.5" lengthAdjust="spacingAndGlyphs" xml:space="preserve">リセット</text>
</g>
</svg></body></html>
